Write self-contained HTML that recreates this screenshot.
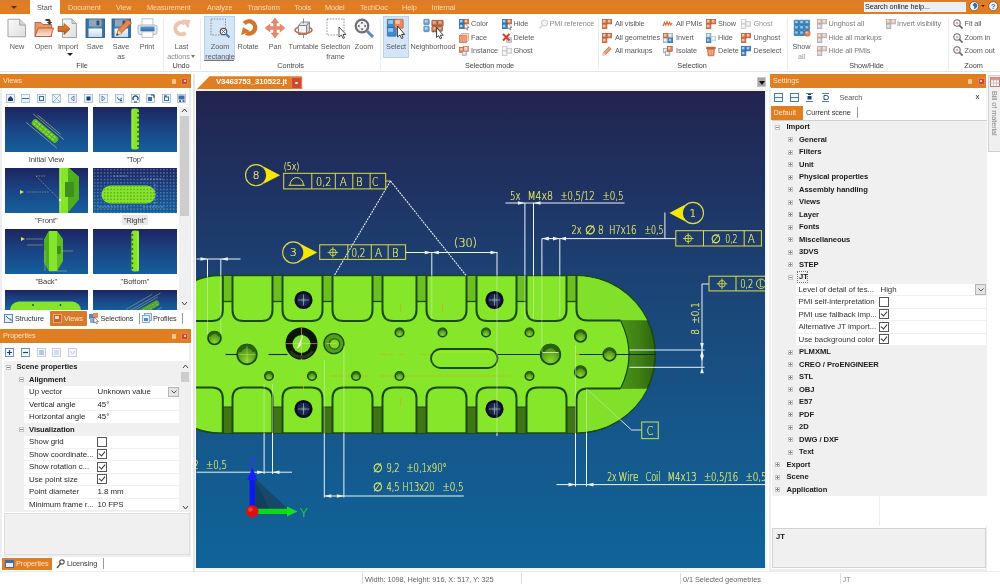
<!DOCTYPE html>
<html lang="en">
<head>
<meta charset="utf-8">
<title>3D Viewer - V3463753_310522.jt</title>
<style>
*{box-sizing:border-box;margin:0;padding:0}
html,body{width:1000px;height:584px;overflow:hidden;background:#fff}
body{filter:blur(0.35px);font-family:"Liberation Sans",sans-serif;font-size:7.3px;letter-spacing:-0.08px;color:#5a5a5a;position:relative}
.a{position:absolute}
.t{position:absolute;white-space:nowrap;line-height:10px;height:10px}
.c{transform:translateX(-50%);text-align:center}
svg{position:absolute;overflow:visible}
#topbar{left:0;top:0;width:1000px;height:14.500px;background:linear-gradient(#d97d2a,#e37d22 40%,#e27c20)}
#topbar .t{color:#f9dcbc;top:2.5px}
#ribbon{left:0;top:14px;width:1000px;height:58px;background:#fff;border-bottom:1px solid #e6e6e6}
.sep{position:absolute;top:4px;width:1px;height:52px;background:#ececec}
.gl{color:#444}
.hl{position:absolute;background:#d3e5f6;border:1px solid #b9d3ec}
.ph{position:absolute;background:#e07f22;color:#fbe3c8;height:14px}
.ph .t{color:#fbe3c8;top:2px;left:3px}
.pin{position:absolute;top:4.500px;width:4px;height:5px;background:#f6c68c;border-radius:1px}
.cls{position:absolute;top:3.500px;width:7px;height:7px;background:#d5452f;border:1px solid #e8805a}
.cls:after{content:"";position:absolute;left:1.500px;top:1.500px;width:2px;height:2px;background:#f9d0c0}
.tree{color:#2a2a2a;font-size:7.900px;letter-spacing:-0.050px}
.b{font-weight:bold;color:#1a1a1a;font-size:7.600px}
.cb{position:absolute;width:9px;height:9px;border:1px solid #555;background:#fff}
.ck:after{content:"";position:absolute;left:2px;top:0px;width:3px;height:5px;border:solid #333;border-width:0 1px 1px 0;transform:rotate(40deg)}
.pm{position:absolute;width:5px;height:5px;border:1px solid #c6c6c6;background:#fff}
.pm:before{content:"";position:absolute;left:0;top:1px;width:3px;height:1px;background:#8a8a8a}
.plus:after{content:"";position:absolute;left:1px;top:0;width:1px;height:3px;background:#8a8a8a}
#viewport{left:195.500px;top:91px;width:569.500px;height:477px;overflow:hidden;background:linear-gradient(#23244d 0%,#1f2e5c 14.5%,#1e3869 27%,#1b4678 44%,#16568a 69%,#0f6499 100%)}
.th{position:absolute;width:83.500px;height:45px;overflow:hidden;background:linear-gradient(#1d2560,#1a4585 50%,#14609c)}
.tl{color:#3a3a3a;font-size:7.600px}
.ann{font-family:"DejaVu Sans","Liberation Sans",sans-serif;font-weight:200;fill:#eef066;stroke:#eef066;stroke-width:.22px}
</style>
</head>
<body>
<div id="topbar" class="a">
<div class="a" style="left:30px;top:0;width:30px;height:15px;background:#fff"></div>
<div class="a" style="left:11px;top:6px;border:3px solid transparent;border-top:3px solid #5a2a0a;border-bottom:0"></div>
<div class="t" style="left:37px;top:2.5px;color:#5a5a5a">Start</div>
<div class="t" style="left:68px;top:2.5px;">Document</div>
<div class="t" style="left:116px;top:2.5px;">View</div>
<div class="t" style="left:147px;top:2.5px;">Measurement</div>
<div class="t" style="left:207px;top:2.5px;">Analyze</div>
<div class="t" style="left:247.5px;top:2.5px;">Transform</div>
<div class="t" style="left:294.5px;top:2.5px;">Tools</div>
<div class="t" style="left:325px;top:2.5px;">Model</div>
<div class="t" style="left:360px;top:2.5px;">TechDoc</div>
<div class="t" style="left:402px;top:2.5px;">Help</div>
<div class="t" style="left:431.5px;top:2.5px;">Internal</div>
<div class="a" style="left:863.500px;top:1.500px;width:102px;height:10.500px;background:#eceef2;border:1px solid #f8f4ee"></div>
<div class="t" style="left:865px;top:2px;color:#222">Search online help...</div>
<svg style="left:968.5px;top:1.2px" width="10.4" height="10.4" viewBox="0 0 10.4 10.4"><circle cx="5.200" cy="5.200" r="4.600" fill="#eaf2fa" stroke="#7a5230" stroke-width=".9"/><path d="M5.500 1.800c2 .3 3 1.800 2.800 3.300-.3 1.600-1.600 2.800-3.300 3-.2-1 .6-1.400 .3-2.300-.3-.8-1.500-.7-1.500-1.700 0-1 1-1.300 1.700-2.300z" fill="#2f6cb4"/></svg>
<div class="a" style="left:981px;top:5.200px;border:2px solid transparent;border-top:2.500px solid #3a1a08;border-bottom:0"></div>
<svg style="left:987.6px;top:1.2px" width="10.4" height="10.4" viewBox="0 0 10.4 10.4"><circle cx="5.200" cy="5.200" r="4.600" fill="#eaf2fa" stroke="#7a5230" stroke-width=".9"/><text x="5.200" y="8" font-size="7.500" font-weight="bold" text-anchor="middle" fill="#3a7cc8" font-family="Liberation Sans,sans-serif">?</text></svg>
</div>
<div id="ribbon" class="a">
<svg width="0" height="0" style="left:0;top:0"><defs><linearGradient id="gfold" x1="0" y1="0" x2="0" y2="1"><stop offset="0" stop-color="#f0a480"/><stop offset="1" stop-color="#fbe4d6"/></linearGradient><linearGradient id="gpage" x1="0" y1="0" x2="1" y2="1"><stop offset="0" stop-color="#fafafa"/><stop offset="1" stop-color="#dedede"/></linearGradient><linearGradient id="garrow" x1="0" y1="0" x2="0" y2="1"><stop offset="0" stop-color="#ec8a3c"/><stop offset="1" stop-color="#c05a14"/></linearGradient><linearGradient id="gflop" x1="0" y1="0" x2="1" y2="0"><stop offset="0" stop-color="#34709f"/><stop offset=".5" stop-color="#4f8fc0"/><stop offset="1" stop-color="#34709f"/></linearGradient><linearGradient id="glabel" x1="0" y1="0" x2="0" y2="1"><stop offset="0" stop-color="#fafbfc"/><stop offset="1" stop-color="#c4d8ea"/></linearGradient><linearGradient id="gband" x1="0" y1="0" x2="0" y2="1"><stop offset="0" stop-color="#5a9ad0"/><stop offset="1" stop-color="#2f6ca4"/></linearGradient></defs></svg>
<div class="hl" style="left:203.500px;top:2px;width:31px;height:44px"></div>
<div class="hl" style="left:383px;top:2px;width:26px;height:42px"></div>
<svg style="left:7.25px;top:4px" width="19.5" height="20" viewBox="0 0 20 20"><path d="M1 1h12l6 6v12H1z" fill="url(#gpage)" stroke="#a2a2a2"/><path d="M13 1v6h6" fill="#d4d4d4" stroke="#a2a2a2"/></svg>
<div class="t c" style="left:17px;top:27.5px;">New</div>
<svg style="left:33.5px;top:4px" width="20" height="20" viewBox="0 0 20 20"><path d="M1 4.500h6l2 2h8.500v12H1z" fill="#e8956c" stroke="#a4522c" stroke-width=".8"/><path d="M1 18.500l3.200-8.500h15.300l-2.500 8.500z" fill="url(#gfold)" stroke="#a4522c" stroke-width=".8"/><path d="M11.500 1h3.500q1.500 0 1.500 1.500v1.500h1.800l-2.800 2.800-2.800-2.800h1.800v-1h-3z" fill="#3a3a3a"/></svg>
<div class="t c" style="left:43.5px;top:27.5px;">Open</div>
<svg style="left:58px;top:4px" width="20" height="20" viewBox="0 0 20 20"><path d="M4.500 1h9.500l4.500 4.500v14H4.500z" fill="url(#gpage)" stroke="#9c9c9c" stroke-width=".9"/><path d="M14 1v4.500h4.500" fill="#d8d8d8" stroke="#9c9c9c" stroke-width=".9"/><path d="M0 8.500h6v-3l6 5.500-6 5.500v-3H0z" fill="url(#garrow)" stroke="#9c4a14" stroke-width=".7"/></svg>
<div class="t c" style="left:68px;top:27.5px;">Import</div>
<svg style="left:85px;top:4px" width="20" height="20" viewBox="0 0 20 20"><rect x="1" y="1" width="18.500" height="18.500" fill="url(#gflop)" stroke="#2f5f8a" stroke-width=".9"/><rect x="4" y="1.500" width="12.500" height="7" fill="#93a6b8"/><rect x="11.500" y="2.500" width="2.800" height="4.800" fill="#3c4c5e"/><rect x="3.500" y="10.500" width="13.500" height="8.500" fill="url(#glabel)"/></svg>
<div class="t c" style="left:95px;top:27.5px;">Save</div>
<svg style="left:111px;top:4px" width="20" height="20" viewBox="0 0 20 20"><rect x="1" y="1" width="18.500" height="18.500" fill="url(#gflop)" stroke="#2f5f8a" stroke-width=".9"/><rect x="4" y="1.500" width="12.500" height="7" fill="#93a6b8"/><rect x="11.500" y="2.500" width="2.800" height="4.800" fill="#3c4c5e"/><rect x="3.500" y="10.500" width="13.500" height="8.500" fill="url(#glabel)"/><path d="M5.500 17.500l2-6.500 9.500-9.500 3.500 3.500-9.500 9.500z" fill="#ec8648" stroke="#b4541e" stroke-width=".8"/><path d="M5.500 17.500l2-5.500 3.500 3.500z" fill="#f8dcc0" stroke="#b4541e" stroke-width=".4"/><path d="M5.500 17.500l.8-2.200 1.400 1.400z" fill="#333"/></svg>
<div class="t c" style="left:121px;top:27.5px;">Save</div>
<div class="t c" style="left:121px;top:37.5px;">as</div>
<svg style="left:137px;top:4px" width="20" height="20" viewBox="0 0 20 20"><rect x="5" y=".8" width="11" height="7.500" fill="#fcfcfc" stroke="#b4b4b4" stroke-width=".8"/><rect x="1" y="7" width="19" height="9.500" rx="2" fill="#e4ebf2" stroke="#9aaaba" stroke-width=".8"/><rect x="3.500" y="8.500" width="14" height="4.800" fill="url(#gband)"/><rect x="5" y="13.800" width="11" height="5.500" fill="#fdfdfd" stroke="#b4b4b4" stroke-width=".8"/></svg>
<div class="t c" style="left:147px;top:27.5px;">Print</div>
<div class="a" style="left:66.500px;top:39px;border:3px solid transparent;border-top:3px solid #222;border-bottom:0"></div>
<div class="t c gl" style="left:82px;top:47px;">File</div>
<div class="sep" style="left:162.500px"></div>
<svg style="left:172px;top:4px" width="19" height="19" viewBox="0 0 20 20"><path d="M14.200 15.500A6.300 6.300 0 1 1 13.500 5.800" fill="none" stroke="#f0c4ae" stroke-width="4.200"/><path d="M10.500 1.500L19.500 2L17 11Z" fill="#f0c4ae"/></svg>
<div class="t c" style="left:181.5px;top:27.5px;">Last</div>
<div class="t c" style="left:178.5px;top:37.5px;color:#8a8a8a">actions</div>
<div class="a" style="left:191px;top:40.500px;border:2.500px solid transparent;border-top:3px solid #777;border-bottom:0"></div>
<div class="t c gl" style="left:181px;top:47px;">Undo</div>
<div class="sep" style="left:200px"></div>
<svg style="left:210px;top:4px" width="20" height="20" viewBox="0 0 20 20"><rect x="1" y="1" width="14.500" height="16" fill="none" stroke="#7a7a7a" stroke-width=".8" stroke-dasharray="1.600 1.200"/><circle cx="13.5" cy="13.5" r="3.2" fill="#eef" stroke="#555" stroke-width="1.2"/><path d="M12 12l3 3m0-3l-3 3" stroke="#555" stroke-width=".8"/><path d="M16 16l3.5 3.5" stroke="#4a7cab" stroke-width="2"/></svg>
<div class="t c" style="left:220px;top:27.5px;">Zoom</div>
<div class="t c" style="left:220px;top:37.5px;">rectangle</div>
<svg style="left:238.5px;top:4px" width="19" height="19" viewBox="0 0 20 20"><path d="M5.500 5.800A6.500 6.500 0 1 1 7.300 15.600" fill="none" stroke="#d9742c" stroke-width="4.600"/><path d="M2.200 18.200L4.200 9.800L11.500 13.800Z" fill="#d9742c"/></svg>
<div class="t c" style="left:248px;top:27.5px;">Rotate</div>
<svg style="left:265px;top:4px" width="20" height="20" viewBox="0 0 20 20"><path d="M10 0l4 5h-2.5v3.500h3.500V6l5 4-5 4v-2.500h-3.500v3.500H14l-4 5-4-5h2.500v-3.500H5V14l-5-4 5-4v2.500h3.500V5H6z" fill="#e58a6c" stroke="#d87050" stroke-width=".4"/></svg>
<div class="t c" style="left:275px;top:27.5px;">Pan</div>
<svg style="left:293px;top:4px" width="21" height="20" viewBox="0 0 20 20"><path d="M1.500 12a8.500 3.600 0 0 1 17 0" fill="none" stroke="#b8704e" stroke-width="1.500"/><path d="M5 7.500h8v9H5z" fill="#f4f4f4" stroke="#808080" stroke-width=".9"/><path d="M5 7.500l3-3.500h8l-3 3.500z" fill="#e4e4e4" stroke="#808080" stroke-width=".9"/><path d="M13 7.500l3-3.500v9l-3 3.500z" fill="#cfcfcf" stroke="#808080" stroke-width=".9"/><path d="M10 .5v5M10 17v3" stroke="#808080" stroke-width=".9"/><path d="M1.500 12a8.500 3.600 0 0 0 17 0" fill="none" stroke="#b8704e" stroke-width="1.700"/></svg>
<div class="t c" style="left:303.5px;top:27.5px;">Turntable</div>
<svg style="left:325.5px;top:4px" width="20" height="20" viewBox="0 0 20 20"><rect x="1" y="1" width="17" height="16" fill="none" stroke="#7a7a7a" stroke-width=".8" stroke-dasharray="1.600 1.200"/><path d="M13 9v10l2.500-2 1.500 3.500 1.500-.7-1.500-3.300h3z" fill="#fff" stroke="#444" stroke-width=".9"/></svg>
<div class="t c" style="left:335.5px;top:27.5px;">Selection</div>
<div class="t c" style="left:335.5px;top:37.5px;">frame</div>
<svg style="left:354px;top:4px" width="20" height="20" viewBox="0 0 20 20"><circle cx="8" cy="8" r="6.300" fill="#f8f8f8" stroke="#6e6e74" stroke-width="2.200"/><path d="M8 3.500l1.500 2h-3zM8 12.500l1.500-2h-3zM3.500 8l2-1.500v3zM12.500 8l-2-1.500v3z" fill="#4a4a4a"/><path d="M13 13l6 6" stroke="#5a8cbc" stroke-width="3"/></svg>
<div class="t c" style="left:364px;top:27.5px;">Zoom</div>
<div class="a" style="left:204px;top:45.500px;width:30px;height:1px;background:#777"></div>
<div class="t c gl" style="left:290.5px;top:47px;">Controls</div>
<div class="sep" style="left:380px"></div>
<svg style="left:386px;top:4px" width="20" height="20" viewBox="0 0 20 20"><rect x="1.3" y="1.3" width="8.9" height="8.9" rx=".6" fill="#3f8ac8" stroke="#245c90" stroke-width=".6"/><rect x="2.2" y="2.2" width="4.75" height="3.61" fill="#a8d4f2" opacity=".85"/><rect x="1.3" y="9.3" width="8.9" height="8.9" rx=".6" fill="#3f8ac8" stroke="#245c90" stroke-width=".6"/><rect x="2.2" y="10.2" width="4.75" height="3.61" fill="#a8d4f2" opacity=".85"/><rect x="8.3" y="1.3" width="8.9" height="8.9" rx=".6" fill="#e8895a" stroke="#a8502c" stroke-width=".6"/><rect x="9.2" y="2.2" width="4.75" height="3.61" fill="#f8ccb0" opacity=".85"/><path d="M11.500 8v11l2.500-2 1.500 3.500 1.600-.7-1.500-3.300h3.200z" fill="#fff" stroke="#333" stroke-width=".9"/></svg>
<div class="t c" style="left:396px;top:27.5px;">Select</div>
<svg style="left:422.5px;top:4px" width="21" height="20" viewBox="0 0 20 20"><rect x="0.3" y="1.3" width="5.4" height="5.4" rx=".6" fill="#6aa4d4" stroke="#3c74a8" stroke-width=".6"/><rect x="1.2" y="2.2" width="3" height="2.28" fill="#c4e0f4" opacity=".85"/><rect x="0.3" y="8.3" width="5.4" height="5.4" rx=".6" fill="#6aa4d4" stroke="#3c74a8" stroke-width=".6"/><rect x="1.2" y="9.2" width="3" height="2.28" fill="#c4e0f4" opacity=".85"/><rect x="8.3" y="2.3" width="5.6" height="5.6" rx=".6" fill="#c8744c" stroke="#7c4428" stroke-width=".6"/><rect x="9.2" y="3.2" width="3.1" height="2.356" fill="#eab898" opacity=".85"/><rect x="14.1" y="2.3" width="5.6" height="5.6" rx=".6" fill="#c8744c" stroke="#7c4428" stroke-width=".6"/><rect x="15" y="3.2" width="3.1" height="2.356" fill="#eab898" opacity=".85"/><rect x="8.3" y="8.3" width="5.6" height="5.6" rx=".6" fill="#c8744c" stroke="#7c4428" stroke-width=".6"/><rect x="9.2" y="9.2" width="3.1" height="2.356" fill="#eab898" opacity=".85"/><rect x="14.1" y="8.3" width="4.9" height="4.9" rx=".6" fill="#c8744c" stroke="#7c4428" stroke-width=".6"/><rect x="15" y="9.2" width="2.75" height="2.09" fill="#eab898" opacity=".85"/><path d="M13 9.500v10l2.300-1.800 1.400 3.200 1.500-.7-1.400-3h3z" fill="#fff" stroke="#333" stroke-width=".9"/></svg>
<div class="t c" style="left:433px;top:27.5px;">Neighborhood</div>
<svg style="left:459px;top:4.7px" width="10" height="10" viewBox="0 0 10 10"><rect x="0.25" y="0.25" width="4.7" height="4.7" fill="#3f86c4" stroke="#245a8c" stroke-width=".5"/><rect x="1" y="1" width="2.34" height="2.34" fill="#a4d0f0"/><rect x="0.25" y="5.05" width="4.7" height="4.7" fill="#3f86c4" stroke="#245a8c" stroke-width=".5"/><rect x="1" y="5.8" width="2.34" height="2.34" fill="#a4d0f0"/><rect x="5.05" y="0.25" width="4.7" height="4.7" fill="#e27a4a" stroke="#a04e2c" stroke-width=".5"/><rect x="5.8" y="1" width="2.34" height="2.34" fill="#f6c4a4"/><path d="M5.500 4v6l1.500-1.200 1 2.200 1-.5-1-2.100h2z" fill="#fff" stroke="#333" stroke-width=".5"/></svg>
<div class="t" style="left:471px;top:4.7px;">Color</div>
<svg style="left:459px;top:18.8px" width="10" height="10" viewBox="0 0 10 10"><path d="M.5 2.500l2-2h7v7l-2 2h-7z" fill="#f8d4c0" stroke="#c8785a" stroke-width=".5"/><rect x=".5" y="2.500" width="7" height="7" fill="#ee9a74" stroke="#c86a44" stroke-width=".5"/></svg>
<div class="t" style="left:471px;top:18.8px;">Face</div>
<svg style="left:459px;top:32px" width="10" height="10" viewBox="0 0 10 10"><rect x="0.25" y="1.25" width="5.1" height="5.1" fill="#e27a4a" stroke="#a04e2c" stroke-width=".5"/><rect x="1" y="2" width="2.52" height="2.52" fill="#f6c4a4"/><rect x="4.65" y="0.25" width="5.1" height="5.1" fill="#f2a888" stroke="#c0583a" stroke-width=".5"/><rect x="5.4" y="1" width="2.52" height="2.52" fill="#fbe0d2"/><rect x="3.25" y="5.25" width="4.3" height="4.3" fill="#c4ccd6" stroke="#8a96a4" stroke-width=".5"/><rect x="4" y="6" width="2.16" height="2.16" fill="#eef2f6"/></svg>
<div class="t" style="left:471px;top:32px;">Instance</div>
<svg style="left:501.5px;top:4.7px" width="10" height="10" viewBox="0 0 10 10"><rect x="0.25" y="0.25" width="4.7" height="4.7" fill="#3f86c4" stroke="#245a8c" stroke-width=".5"/><rect x="1" y="1" width="2.34" height="2.34" fill="#a4d0f0"/><rect x="0.25" y="5.05" width="4.7" height="4.7" fill="#3f86c4" stroke="#245a8c" stroke-width=".5"/><rect x="1" y="5.8" width="2.34" height="2.34" fill="#a4d0f0"/><rect x="5.05" y="0.25" width="4.7" height="4.7" fill="#e27a4a" stroke="#a04e2c" stroke-width=".5"/><rect x="5.8" y="1" width="2.34" height="2.34" fill="#f6c4a4"/><path d="M5.500 4v6l1.500-1.200 1 2.200 1-.5-1-2.100h2z" fill="#fff" stroke="#333" stroke-width=".5"/></svg>
<div class="t" style="left:513.5px;top:4.7px;">Hide</div>
<svg style="left:501.5px;top:18.8px" width="10" height="10" viewBox="0 0 10 10"><rect x="4.75" y="4.75" width="4.7" height="4.7" fill="#c4ccd6" stroke="#8a96a4" stroke-width=".5"/><rect x="5.5" y="5.5" width="2.34" height="2.34" fill="#eef2f6"/><path d="M1 1l6.500 6.500M7.500 1l-6.500 6.500" stroke="#d83a2a" stroke-width="2"/></svg>
<div class="t" style="left:513.5px;top:18.8px;">Delete</div>
<svg style="left:501.5px;top:32px" width="10" height="10" viewBox="0 0 10 10"><rect x="0.25" y="0.25" width="4.7" height="4.7" fill="#ececec" stroke="#b4b4b4" stroke-width=".5"/><rect x="1" y="1" width="2.34" height="2.34" fill="#fafafa"/><rect x="0.25" y="5.05" width="4.7" height="4.7" fill="#ececec" stroke="#b4b4b4" stroke-width=".5"/><rect x="1" y="5.8" width="2.34" height="2.34" fill="#fafafa"/><rect x="5.05" y="2.65" width="4.7" height="4.7" fill="#e4e4e4" stroke="#b4b4b4" stroke-width=".5"/><rect x="5.8" y="3.4" width="2.34" height="2.34" fill="#f6f6f6"/></svg>
<div class="t" style="left:513.5px;top:32px;">Ghost</div>
<svg style="left:538.5px;top:4.7px" width="10" height="10" viewBox="0 0 10 10"><circle cx="5.500" cy="4" r="3" fill="#f4f4f4" stroke="#cfcfcf" stroke-width="1.200"/><path d="M3.500 6l-3 3.500" stroke="#d8d8d8" stroke-width="1.600"/></svg>
<div class="t" style="left:549.5px;top:4.7px;color:#8a8a8a">PMI reference</div>
<div class="t c gl" style="left:489.5px;top:47px;">Selection mode</div>
<div class="sep" style="left:598px"></div>
<svg style="left:602px;top:4.7px" width="10" height="10" viewBox="0 0 10 10"><rect x="0.25" y="0.25" width="4.7" height="4.7" fill="#e27a4a" stroke="#a04e2c" stroke-width=".5"/><rect x="1" y="1" width="2.34" height="2.34" fill="#f6c4a4"/><rect x="5.05" y="0.25" width="4.7" height="4.7" fill="#e27a4a" stroke="#a04e2c" stroke-width=".5"/><rect x="5.8" y="1" width="2.34" height="2.34" fill="#f6c4a4"/><rect x="0.25" y="5.05" width="4.7" height="4.7" fill="#e27a4a" stroke="#a04e2c" stroke-width=".5"/><rect x="1" y="5.8" width="2.34" height="2.34" fill="#f6c4a4"/></svg>
<div class="t" style="left:615px;top:4.7px;">All visible</div>
<svg style="left:602px;top:18.8px" width="10" height="10" viewBox="0 0 10 10"><rect x="0.25" y="0.25" width="4.7" height="4.7" fill="#e27a4a" stroke="#a04e2c" stroke-width=".5"/><rect x="1" y="1" width="2.34" height="2.34" fill="#f6c4a4"/><rect x="5.05" y="0.25" width="4.7" height="4.7" fill="#e27a4a" stroke="#a04e2c" stroke-width=".5"/><rect x="5.8" y="1" width="2.34" height="2.34" fill="#f6c4a4"/><rect x="0.25" y="5.05" width="4.7" height="4.7" fill="#e27a4a" stroke="#a04e2c" stroke-width=".5"/><rect x="1" y="5.8" width="2.34" height="2.34" fill="#f6c4a4"/></svg>
<div class="t" style="left:615px;top:18.8px;">All geometries</div>
<svg style="left:602px;top:32px" width="10" height="10" viewBox="0 0 10 10"><path d="M.8 9.200l.8-3 5.400-5.400 2.200 2.200-5.400 5.400z" fill="#ee9a74" stroke="#b05a38" stroke-width=".6"/><path d="M.8 9.200l.8-3 2.200 2.200z" fill="#f8dcc8"/></svg>
<div class="t" style="left:615px;top:32px;">All markups</div>
<svg style="left:663px;top:4.7px" width="10" height="10" viewBox="0 0 10 10"><path d="M0 7l1.500-3.500 1.200 2.500 1.300-3 1.300 3 1.200-2.500 1.300 2.500 1.200-2" fill="none" stroke="#e0703a" stroke-width="1.300"/></svg>
<div class="t" style="left:676px;top:4.7px;">All PMIs</div>
<svg style="left:663px;top:18.8px" width="10" height="10" viewBox="0 0 10 10"><rect x="0.25" y="0.25" width="4.7" height="4.7" fill="#e27a4a" stroke="#a04e2c" stroke-width=".5"/><rect x="1" y="1" width="2.34" height="2.34" fill="#f6c4a4"/><rect x="5.05" y="0.25" width="4.7" height="4.7" fill="#c4ccd6" stroke="#8a96a4" stroke-width=".5"/><rect x="5.8" y="1" width="2.34" height="2.34" fill="#eef2f6"/><rect x="0.25" y="5.05" width="4.7" height="4.7" fill="#c4ccd6" stroke="#8a96a4" stroke-width=".5"/><rect x="1" y="5.8" width="2.34" height="2.34" fill="#eef2f6"/><rect x="5.05" y="5.05" width="4.7" height="4.7" fill="#3f86c4" stroke="#245a8c" stroke-width=".5"/><rect x="5.8" y="5.8" width="2.34" height="2.34" fill="#a4d0f0"/></svg>
<div class="t" style="left:676px;top:18.8px;">Invert</div>
<svg style="left:663px;top:32px" width="10" height="10" viewBox="0 0 10 10"><rect x="0.25" y="2.25" width="4.7" height="4.7" fill="#c4ccd6" stroke="#8a96a4" stroke-width=".5"/><rect x="1" y="3" width="2.34" height="2.34" fill="#eef2f6"/><rect x="2.25" y="5.05" width="4.7" height="4.7" fill="#c4ccd6" stroke="#8a96a4" stroke-width=".5"/><rect x="3" y="5.8" width="2.34" height="2.34" fill="#eef2f6"/><rect x="4.25" y="0.25" width="5.1" height="5.1" fill="#e27a4a" stroke="#a04e2c" stroke-width=".5"/><rect x="5" y="1" width="2.52" height="2.52" fill="#f6c4a4"/></svg>
<div class="t" style="left:676px;top:32px;">Isolate</div>
<svg style="left:705.5px;top:4.7px" width="10" height="10" viewBox="0 0 10 10"><rect x="0.25" y="0.25" width="4.7" height="4.7" fill="#e27a4a" stroke="#a04e2c" stroke-width=".5"/><rect x="1" y="1" width="2.34" height="2.34" fill="#f6c4a4"/><rect x="5.05" y="0.25" width="4.7" height="4.7" fill="#e27a4a" stroke="#a04e2c" stroke-width=".5"/><rect x="5.8" y="1" width="2.34" height="2.34" fill="#f6c4a4"/><rect x="0.25" y="5.05" width="4.7" height="4.7" fill="#e27a4a" stroke="#a04e2c" stroke-width=".5"/><rect x="1" y="5.8" width="2.34" height="2.34" fill="#f6c4a4"/></svg>
<div class="t" style="left:718px;top:4.7px;">Show</div>
<svg style="left:705.5px;top:18.8px" width="10" height="10" viewBox="0 0 10 10"><rect x="0.25" y="0.25" width="4.7" height="4.7" fill="#9cc8ec" stroke="#5a8ab4" stroke-width=".5"/><rect x="1" y="1" width="2.34" height="2.34" fill="#dcecf8"/><rect x="0.25" y="5.05" width="4.7" height="4.7" fill="#3f86c4" stroke="#245a8c" stroke-width=".5"/><rect x="1" y="5.8" width="2.34" height="2.34" fill="#a4d0f0"/><rect x="5.05" y="3.25" width="4.7" height="4.7" fill="#dce8f4" stroke="#a4b8cc" stroke-width=".5"/><rect x="5.8" y="4" width="2.34" height="2.34" fill="#f4f8fc"/></svg>
<div class="t" style="left:718px;top:18.8px;">Hide</div>
<svg style="left:705.5px;top:32px" width="10" height="10" viewBox="0 0 10 10"><path d="M1.500 2.800h7l-.6 7H2.100z" fill="#ea8c64" stroke="#b4522c" stroke-width=".6"/><rect x=".7" y="1" width="8.600" height="1.800" fill="#d4683c" stroke="#a04a28" stroke-width=".4"/><path d="M3.500 4v4.500M5 4v4.500M6.500 4v4.500" stroke="#f6c4a8" stroke-width=".6"/></svg>
<div class="t" style="left:718px;top:32px;">Delete</div>
<svg style="left:741px;top:4.7px" width="10" height="10" viewBox="0 0 10 10"><rect x="0.25" y="0.25" width="4.7" height="4.7" fill="#ececec" stroke="#b4b4b4" stroke-width=".5"/><rect x="1" y="1" width="2.34" height="2.34" fill="#fafafa"/><rect x="0.25" y="5.05" width="4.7" height="4.7" fill="#ececec" stroke="#b4b4b4" stroke-width=".5"/><rect x="1" y="5.8" width="2.34" height="2.34" fill="#fafafa"/><rect x="5.05" y="2.65" width="4.7" height="4.7" fill="#e4e4e4" stroke="#b4b4b4" stroke-width=".5"/><rect x="5.8" y="3.4" width="2.34" height="2.34" fill="#f6f6f6"/></svg>
<div class="t" style="left:753.5px;top:4.7px;color:#9a9a9a">Ghost</div>
<svg style="left:741px;top:18.8px" width="10" height="10" viewBox="0 0 10 10"><rect x="0.25" y="0.25" width="4.7" height="4.7" fill="#e27a4a" stroke="#a04e2c" stroke-width=".5"/><rect x="1" y="1" width="2.34" height="2.34" fill="#f6c4a4"/><rect x="5.05" y="0.25" width="4.7" height="4.7" fill="#e27a4a" stroke="#a04e2c" stroke-width=".5"/><rect x="5.8" y="1" width="2.34" height="2.34" fill="#f6c4a4"/><rect x="0.25" y="5.05" width="4.7" height="4.7" fill="#e27a4a" stroke="#a04e2c" stroke-width=".5"/><rect x="1" y="5.8" width="2.34" height="2.34" fill="#f6c4a4"/></svg>
<div class="t" style="left:753.5px;top:18.8px;">Unghost</div>
<svg style="left:741px;top:32px" width="10" height="10" viewBox="0 0 10 10"><rect x="0.25" y="0.25" width="4.7" height="4.7" fill="#3f86c4" stroke="#245a8c" stroke-width=".5"/><rect x="1" y="1" width="2.34" height="2.34" fill="#a4d0f0"/><rect x="5.05" y="0.25" width="4.7" height="4.7" fill="#3f86c4" stroke="#245a8c" stroke-width=".5"/><rect x="5.8" y="1" width="2.34" height="2.34" fill="#a4d0f0"/><rect x="0.25" y="5.05" width="4.7" height="4.7" fill="#3f86c4" stroke="#245a8c" stroke-width=".5"/><rect x="1" y="5.8" width="2.34" height="2.34" fill="#a4d0f0"/></svg>
<div class="t" style="left:753.5px;top:32px;">Deselect</div>
<div class="t c gl" style="left:692px;top:47px;">Selection</div>
<div class="sep" style="left:786.500px"></div>
<svg style="left:793px;top:4.5px" width="17.5" height="17.5" viewBox="0 0 20 20"><rect x="1.3" y="1.3" width="5.7" height="5.7" rx=".6" fill="#3f8ac8" stroke="#245c90" stroke-width=".6"/><rect x="2.2" y="2.2" width="3.15" height="2.394" fill="#a8d4f2" opacity=".85"/><rect x="7.3" y="1.3" width="5.7" height="5.7" rx=".6" fill="#3f8ac8" stroke="#245c90" stroke-width=".6"/><rect x="8.2" y="2.2" width="3.15" height="2.394" fill="#a8d4f2" opacity=".85"/><rect x="13.3" y="1.3" width="5.7" height="5.7" rx=".6" fill="#3f8ac8" stroke="#245c90" stroke-width=".6"/><rect x="14.2" y="2.2" width="3.15" height="2.394" fill="#a8d4f2" opacity=".85"/><rect x="1.3" y="7.3" width="5.7" height="5.7" rx=".6" fill="#3f8ac8" stroke="#245c90" stroke-width=".6"/><rect x="2.2" y="8.2" width="3.15" height="2.394" fill="#a8d4f2" opacity=".85"/><rect x="7.3" y="7.3" width="5.7" height="5.7" rx=".6" fill="#3f8ac8" stroke="#245c90" stroke-width=".6"/><rect x="8.2" y="8.2" width="3.15" height="2.394" fill="#a8d4f2" opacity=".85"/><rect x="13.3" y="7.3" width="5.7" height="5.7" rx=".6" fill="#3f8ac8" stroke="#245c90" stroke-width=".6"/><rect x="14.2" y="8.2" width="3.15" height="2.394" fill="#a8d4f2" opacity=".85"/><rect x="1.3" y="13.3" width="5.7" height="5.7" rx=".6" fill="#3f8ac8" stroke="#245c90" stroke-width=".6"/><rect x="2.2" y="14.2" width="3.15" height="2.394" fill="#a8d4f2" opacity=".85"/><rect x="7.3" y="13.3" width="5.7" height="5.7" rx=".6" fill="#3f8ac8" stroke="#245c90" stroke-width=".6"/><rect x="8.2" y="14.2" width="3.15" height="2.394" fill="#a8d4f2" opacity=".85"/><rect x="13.3" y="13.3" width="5.7" height="5.7" rx=".6" fill="#3f8ac8" stroke="#245c90" stroke-width=".6"/><rect x="14.2" y="14.2" width="3.15" height="2.394" fill="#a8d4f2" opacity=".85"/><circle cx="16.500" cy="16.500" r="3.200" fill="#e8895a" stroke="#a8502c" stroke-width=".5"/><circle cx="15.500" cy="15.500" r="1.200" fill="#f8ccb0"/></svg>
<div class="t c" style="left:801.5px;top:27.5px;">Show</div>
<div class="t c" style="left:801.5px;top:37.5px;color:#999">all</div>
<svg style="left:816.5px;top:4.7px" width="10" height="10" viewBox="0 0 10 10"><rect x="0.25" y="0.25" width="4.7" height="4.7" fill="#dcb8a8" stroke="#b89888" stroke-width=".5"/><rect x="1" y="1" width="2.34" height="2.34" fill="#f0dcd2"/><rect x="5.05" y="0.25" width="4.7" height="4.7" fill="#d4c4c4" stroke="#b0a0a0" stroke-width=".5"/><rect x="5.8" y="1" width="2.34" height="2.34" fill="#ece4e4"/><rect x="0.25" y="5.05" width="4.7" height="4.7" fill="#c8c4cc" stroke="#a09ca4" stroke-width=".5"/><rect x="1" y="5.8" width="2.34" height="2.34" fill="#e8e6ea"/></svg>
<div class="t" style="left:828.5px;top:4.7px;color:#7c7c7c">Unghost all</div>
<svg style="left:816.5px;top:18.8px" width="10" height="10" viewBox="0 0 10 10"><rect x="0.25" y="0.25" width="4.7" height="4.7" fill="#dcb8a8" stroke="#b89888" stroke-width=".5"/><rect x="1" y="1" width="2.34" height="2.34" fill="#f0dcd2"/><rect x="5.05" y="0.25" width="4.7" height="4.7" fill="#d4c4c4" stroke="#b0a0a0" stroke-width=".5"/><rect x="5.8" y="1" width="2.34" height="2.34" fill="#ece4e4"/><rect x="0.25" y="5.05" width="4.7" height="4.7" fill="#c8c4cc" stroke="#a09ca4" stroke-width=".5"/><rect x="1" y="5.8" width="2.34" height="2.34" fill="#e8e6ea"/></svg>
<div class="t" style="left:828.5px;top:18.8px;color:#7c7c7c">Hide all markups</div>
<svg style="left:816.5px;top:32px" width="10" height="10" viewBox="0 0 10 10"><rect x="0.25" y="0.25" width="4.7" height="4.7" fill="#dcb8a8" stroke="#b89888" stroke-width=".5"/><rect x="1" y="1" width="2.34" height="2.34" fill="#f0dcd2"/><rect x="5.05" y="0.25" width="4.7" height="4.7" fill="#d4c4c4" stroke="#b0a0a0" stroke-width=".5"/><rect x="5.8" y="1" width="2.34" height="2.34" fill="#ece4e4"/><rect x="0.25" y="5.05" width="4.7" height="4.7" fill="#c8c4cc" stroke="#a09ca4" stroke-width=".5"/><rect x="1" y="5.8" width="2.34" height="2.34" fill="#e8e6ea"/></svg>
<div class="t" style="left:828.5px;top:32px;color:#7c7c7c">Hide all PMIs</div>
<svg style="left:885.5px;top:4.7px" width="10" height="10" viewBox="0 0 10 10"><rect x="0.25" y="0.25" width="4.7" height="4.7" fill="#dcb8a8" stroke="#b89888" stroke-width=".5"/><rect x="1" y="1" width="2.34" height="2.34" fill="#f0dcd2"/><rect x="5.05" y="0.25" width="4.7" height="4.7" fill="#d4c4c4" stroke="#b0a0a0" stroke-width=".5"/><rect x="5.8" y="1" width="2.34" height="2.34" fill="#ece4e4"/><rect x="0.25" y="5.05" width="4.7" height="4.7" fill="#c8c4cc" stroke="#a09ca4" stroke-width=".5"/><rect x="1" y="5.8" width="2.34" height="2.34" fill="#e8e6ea"/></svg>
<div class="t" style="left:897px;top:4.7px;color:#7c7c7c">Invert visibility</div>
<div class="t c gl" style="left:866.5px;top:47px;">Show/Hide</div>
<div class="sep" style="left:947.500px"></div>
<svg style="left:952.5px;top:4.7px" width="10" height="10" viewBox="0 0 10 10"><circle cx="4" cy="4" r="3.200" fill="#f6f6f6" stroke="#6e6e78" stroke-width="1.100"/><circle cx="4" cy="4" r="1.100" fill="#e89868"/><path d="M6.400 6.400l3.200 3.200" stroke="#5a6a80" stroke-width="1.600"/></svg>
<div class="t" style="left:964.5px;top:4.7px;">Fit all</div>
<svg style="left:952.5px;top:18.8px" width="10" height="10" viewBox="0 0 10 10"><circle cx="4" cy="4" r="3.200" fill="#f6f6f6" stroke="#6e6e78" stroke-width="1.100"/><circle cx="4" cy="4" r="1.100" fill="#e89868"/><path d="M6.400 6.400l3.200 3.200" stroke="#5a6a80" stroke-width="1.600"/></svg>
<div class="t" style="left:964.5px;top:18.8px;">Zoom in</div>
<svg style="left:952.5px;top:32px" width="10" height="10" viewBox="0 0 10 10"><circle cx="4" cy="4" r="3.200" fill="#f6f6f6" stroke="#6e6e78" stroke-width="1.100"/><circle cx="4" cy="4" r="1.100" fill="#e89868"/><path d="M6.400 6.400l3.200 3.200" stroke="#5a6a80" stroke-width="1.600"/></svg>
<div class="t" style="left:964.5px;top:32px;">Zoom out</div>
<div class="t c gl" style="left:973.5px;top:47px;">Zoom</div>
</div>
<div id="views" class="a" style="left:0;top:74px;width:192px;height:254px">
<div class="ph" style="left:0;top:0;width:191px"><div class="t">Views</div><div class="pin" style="left:172px"></div><div class="cls" style="left:181px"></div></div>
<div class="a" style="left:0;top:14px;width:191px;height:223px;border:2px solid #eceff2;border-top:0"></div>
<svg style="left:5.8px;top:19.5px" width="9" height="9" viewBox="0 0 9 9"><rect x=".5" y=".5" width="8" height="8" fill="#eef4fb" stroke="#9cb8d8" stroke-width=".8"/><path d="M2 4.500l2.500-2.500 2.500 2.500v2.500h-5z" fill="#1d3f70"/></svg>
<svg style="left:21.2px;top:19.5px" width="9" height="9" viewBox="0 0 9 9"><rect x=".5" y=".5" width="8" height="8" fill="#eef4fb" stroke="#9cb8d8" stroke-width=".8"/><path d="M1 4.500h7" stroke="#3a6ea5"/></svg>
<svg style="left:36.7px;top:19.5px" width="9" height="9" viewBox="0 0 9 9"><rect x=".5" y=".5" width="8" height="8" fill="#eef4fb" stroke="#9cb8d8" stroke-width=".8"/><rect x="2.500" y="2.500" width="4" height="4" fill="none" stroke="#3a6ea5"/></svg>
<svg style="left:52.3px;top:19.5px" width="9" height="9" viewBox="0 0 9 9"><rect x=".5" y=".5" width="8" height="8" fill="#eef4fb" stroke="#9cb8d8" stroke-width=".8"/><path d="M1 1l7 7M8 1l-7 7" stroke="#7a9cc5" stroke-width=".7"/></svg>
<svg style="left:67.9px;top:19.5px" width="9" height="9" viewBox="0 0 9 9"><rect x=".5" y=".5" width="8" height="8" fill="#eef4fb" stroke="#9cb8d8" stroke-width=".8"/><path d="M6 2l-3 2.500 3 2.500z" fill="none" stroke="#3a6ea5" stroke-width=".8"/></svg>
<svg style="left:83.7px;top:19.5px" width="9" height="9" viewBox="0 0 9 9"><rect x=".5" y=".5" width="8" height="8" fill="#eef4fb" stroke="#9cb8d8" stroke-width=".8"/><rect x="2.500" y="2.500" width="4" height="4" fill="#1d3f70"/></svg>
<svg style="left:99.1px;top:19.5px" width="9" height="9" viewBox="0 0 9 9"><rect x=".5" y=".5" width="8" height="8" fill="#eef4fb" stroke="#9cb8d8" stroke-width=".8"/><path d="M3 2l3 2.500-3 2.500z" fill="none" stroke="#3a6ea5" stroke-width=".8"/></svg>
<svg style="left:114.9px;top:19.5px" width="9" height="9" viewBox="0 0 9 9"><rect x=".5" y=".5" width="8" height="8" fill="#eef4fb" stroke="#9cb8d8" stroke-width=".8"/><path d="M2 3l2 3 3-2" fill="none" stroke="#3a6ea5"/><circle cx="6" cy="6.500" r="1" fill="#1d3f70"/></svg>
<svg style="left:130.5px;top:19.5px" width="9" height="9" viewBox="0 0 9 9"><rect x=".5" y=".5" width="8" height="8" fill="#eef4fb" stroke="#9cb8d8" stroke-width=".8"/><path d="M2.500 6a2.500 2.500 0 1 1 4 0" fill="none" stroke="#1d3f70" stroke-width="1.200"/><path d="M3 8h3" stroke="#1d3f70"/></svg>
<svg style="left:146.1px;top:19.5px" width="9" height="9" viewBox="0 0 9 9"><rect x=".5" y=".5" width="8" height="8" fill="#eef4fb" stroke="#9cb8d8" stroke-width=".8"/><rect x="2" y="3" width="4" height="4" fill="#3a6ea5"/><path d="M5 1h3v3" fill="none" stroke="#1d3f70"/></svg>
<svg style="left:161.7px;top:19.5px" width="9" height="9" viewBox="0 0 9 9"><rect x=".5" y=".5" width="8" height="8" fill="#eef4fb" stroke="#9cb8d8" stroke-width=".8"/><rect x="2.500" y="3" width="4" height="3.500" fill="none" stroke="#3a6ea5"/><path d="M2 2h3" stroke="#1d3f70"/></svg>
<svg style="left:177.3px;top:19.5px" width="9" height="9" viewBox="0 0 9 9"><rect x=".5" y=".5" width="8" height="8" fill="#eef4fb" stroke="#9cb8d8" stroke-width=".8"/><rect x="1.500" y="1.500" width="6" height="4" fill="#3a6ea5"/><path d="M2 7h2M5.500 7h2" stroke="#1d3f70" stroke-width="1.300"/></svg>
<div class="th" style="left:4.6px;top:32.5px;"><svg style="left:0;top:0" width="84" height="45" viewBox="0 0 84 45"><g transform="rotate(40 40 24)"><rect x="24" y="20.500" width="32" height="7" rx="3" fill="#5fb828"/><path d="M26 22.500h28M26 25.500h28" stroke="#9ae83a" stroke-width="1.200" stroke-dasharray="2.500 1.500"/><path d="M20 18.500h40M20 29.500h40M24 16.500h30" stroke="#d8d88a" stroke-width=".5" fill="none"/></g></svg></div>
<div class="th" style="left:93px;top:32.5px;"><svg style="left:0;top:0" width="84" height="45" viewBox="0 0 84 45"><rect x="38.400" y="1.500" width="7.600" height="41" rx="3" fill="#86e52a"/><g transform="translate(44.200 0)"><rect x="0" y="5" width="1.800" height="2" fill="#2f6f18"/><rect x="0" y="9.7" width="1.800" height="2" fill="#2f6f18"/><rect x="0" y="14.4" width="1.800" height="2" fill="#2f6f18"/><rect x="0" y="19.1" width="1.800" height="2" fill="#2f6f18"/><rect x="0" y="23.8" width="1.800" height="2" fill="#2f6f18"/><rect x="0" y="28.5" width="1.800" height="2" fill="#2f6f18"/><rect x="0" y="33.2" width="1.800" height="2" fill="#2f6f18"/><rect x="0" y="37.9" width="1.800" height="2" fill="#2f6f18"/></g><rect x="38.400" y="1.500" width="2" height="41" rx="1" fill="#a8f04a" opacity=".6"/></svg></div>
<div class="t c tl" style="left:46.3px;top:80.5px;">Initial View</div>
<div class="t c tl" style="left:135px;top:80.5px;">"Top"</div>
<div class="th" style="left:4.6px;top:93.5px;"><svg style="left:0;top:0" width="84" height="45" viewBox="0 0 84 45"><path d="M55 0h9l10 9v22l-10 12h-9z" fill="#6fcf24"/><path d="M55 0h8v45h-8z" fill="#86e52a"/><path d="M63 0l11 9v22l-11 13z" fill="#4fae1c"/><rect x="60" y="14" width="9" height="15" fill="#3f8f1f"/><path d="M55 0v45" stroke="#a8f04a" stroke-width="1.500"/><path d="M22 24h22M31 8l24 24M31 8h10" stroke="#b8c880" stroke-width=".5" stroke-dasharray="1.500 1" fill="none"/><path d="M15 22l4 2-4 2z" fill="#e8e23a"/><circle cx="55" cy="32" r="1.200" fill="#fff"/></svg></div>
<div class="th" style="left:93px;top:93.5px;"><svg style="left:0;top:0" width="84" height="45" viewBox="0 0 84 45"><defs><pattern id="dg" width="3.300" height="3.300" patternUnits="userSpaceOnUse"><circle cx="1.600" cy="1.600" r=".55" fill="#a8c8ea"/></pattern><pattern id="dg2" width="3.300" height="3.300" patternUnits="userSpaceOnUse"><circle cx="1.600" cy="1.600" r=".65" fill="#2a6f18"/></pattern></defs><rect width="84" height="45" fill="url(#dg)"/><rect x="8.500" y="17.500" width="54" height="18" rx="9" fill="#86e52a"/><rect x="8.500" y="17.500" width="54" height="18" rx="9" fill="url(#dg2)"/><path d="M20 8h14M48 11h22M62 16v22M6 39h30M50 39h20" stroke="#9fd0e8" stroke-width=".5" stroke-dasharray="2 1" fill="none"/></svg></div>
<div class="a" style="left:122px;top:141px;width:26px;height:9.500px;background:#e9e9e9"></div>
<div class="t c tl" style="left:46.3px;top:141.5px;">"Front"</div>
<div class="t c tl" style="left:135px;top:141.5px;">"Right"</div>
<div class="th" style="left:4.6px;top:154.5px;"><svg style="left:0;top:0" width="84" height="45" viewBox="0 0 84 45"><path d="M44 2l8 0v40l-8 0-5-9v-22z" fill="#86e52a"/><path d="M52 2l6 8v22l-6 10z" fill="#5fc020"/><path d="M39 11l5-9v40l-5-9z" fill="#4fae1c"/><rect x="52" y="17" width="4" height="8" fill="#3f8f1f"/><path d="M21 10h17M22 16h16M40 22v20M44 42h18M56 22h12" stroke="#b8c880" stroke-width=".5" fill="none"/><path d="M16 8l4 2-4 2z" fill="#e8e23a"/></svg></div>
<div class="th" style="left:93px;top:154.5px;"><svg style="left:0;top:0" width="84" height="45" viewBox="0 0 84 45"><rect x="38.400" y="1.500" width="7.600" height="41" rx="3" fill="#86e52a"/><g transform="translate(38.400 0)"><rect x="0" y="5" width="1.800" height="2" fill="#2f6f18"/><rect x="0" y="9.7" width="1.800" height="2" fill="#2f6f18"/><rect x="0" y="14.4" width="1.800" height="2" fill="#2f6f18"/><rect x="0" y="19.1" width="1.800" height="2" fill="#2f6f18"/><rect x="0" y="23.8" width="1.800" height="2" fill="#2f6f18"/><rect x="0" y="28.5" width="1.800" height="2" fill="#2f6f18"/><rect x="0" y="33.2" width="1.800" height="2" fill="#2f6f18"/><rect x="0" y="37.9" width="1.800" height="2" fill="#2f6f18"/></g><rect x="44" y="1.500" width="2" height="41" rx="1" fill="#a8f04a" opacity=".6"/></svg></div>
<div class="t c tl" style="left:46.3px;top:202.5px;">"Back"</div>
<div class="t c tl" style="left:135px;top:202.5px;">"Bottom"</div>
<div class="th" style="left:4.6px;top:216px;height:19.500px"><svg style="left:0;top:0" width="84" height="45" viewBox="0 0 84 45"><rect x="5" y="11.500" width="71" height="50" rx="9" fill="#86e52a"/><circle cx="28" cy="15" r=".9" fill="#1a4010"/><circle cx="55.500" cy="15" r=".9" fill="#1a4010"/></svg></div>
<div class="th" style="left:93px;top:216px;height:19.500px"><svg style="left:0;top:0" width="84" height="45" viewBox="0 0 84 45"><g transform="rotate(-30 52 20)"><rect x="34" y="17" width="34" height="6" rx="2.500" fill="#4fa030"/><path d="M36 19h30M36 21.500h30" stroke="#7fd040" stroke-width=".8" stroke-dasharray="2 1.500"/><path d="M30 13h44M30 15h40M36 10h30M40 26h28" stroke="#a8b888" stroke-width=".45" fill="none"/></g></svg></div>
<div class="a" style="left:178.500px;top:33px;width:11px;height:203px;background:#f0f0f0"></div>
<div class="a" style="left:179.500px;top:42px;width:9px;height:100px;background:#cdcdcd"></div>
<svg style="left:180.5px;top:34px" width="7" height="5" viewBox="0 0 7 5"><path d="M1 4l2.500-3 2.500 3" fill="none" stroke="#444" stroke-width="1"/></svg>
<svg style="left:180.5px;top:227px" width="7" height="5" viewBox="0 0 7 5"><path d="M1 1l2.500 3 2.500-3" fill="none" stroke="#444" stroke-width="1"/></svg>
<div class="a" style="left:0;top:236px;width:191px;height:17px;background:#fff"></div>
<div class="a" style="left:49.500px;top:237px;width:37.500px;height:15px;background:#d87a2c;border-radius:1px"></div>
<svg style="left:4px;top:239.5px" width="9" height="9" viewBox="0 0 9 9"><rect x=".5" y=".5" width="8" height="8" fill="#e6eef8" stroke="#5f86b5"/><path d="M2 2l3 3M5 5h2v2" stroke="#2a4f80" fill="none" stroke-width=".8"/></svg>
<div class="t" style="left:15px;top:239.5px;color:#333">Structure</div>
<svg style="left:53px;top:239.5px" width="9" height="9" viewBox="0 0 9 9"><rect x=".5" y=".5" width="8" height="8" fill="#c9622a" stroke="#f4c9a0" stroke-width=".6"/><rect x="2" y="2" width="4" height="3" fill="#f6d9b8"/></svg>
<div class="t" style="left:64px;top:239.5px;color:#fbe3c8">Views</div>
<svg style="left:89px;top:239px" width="10" height="10" viewBox="0 0 10 10"><rect x="0" y="1" width="5" height="5" fill="#4a8cc3"/><rect x="4" y="0" width="5" height="5" fill="#e8875a"/><rect x="1" y="5" width="5" height="5" fill="#8fb0d0"/><path d="M5 4v6l1.500-1 1 2 1-.5-1-2h2z" fill="#fff" stroke="#333" stroke-width=".5"/></svg>
<div class="t" style="left:100.5px;top:239.5px;color:#333">Selections</div>
<div class="a" style="left:138.500px;top:239px;width:1px;height:11px;background:#999"></div>
<svg style="left:141.5px;top:239px" width="10" height="10" viewBox="0 0 10 10"><rect x="2.500" y=".5" width="7" height="7" fill="#dfe9f5" stroke="#6f94c0" stroke-width=".8"/><rect x=".5" y="2.500" width="7" height="7" fill="#eef3fa" stroke="#6f94c0" stroke-width=".8"/><rect x="2" y="5" width="4" height="3" fill="#4a8cc3"/></svg>
<div class="t" style="left:153px;top:239.5px;color:#333">Profiles</div>
<div class="a" style="left:182px;top:239px;width:1px;height:11px;background:#999"></div>
</div>
<div id="props" class="a" style="left:0;top:329px;width:192px;height:243px">
<div class="ph" style="left:0;top:0;width:191px"><div class="t">Properties</div><div class="pin" style="left:172px"></div><div class="cls" style="left:181px"></div></div>
<div class="a" style="left:0;top:14px;width:191px;height:214px;border:2px solid #eceff2;border-top:0"></div>
<svg style="left:5.1px;top:19px" width="9" height="9" viewBox="0 0 9 9"><rect x=".5" y=".5" width="8" height="8" fill="#f4f8fc" stroke="#5f86b5" stroke-width=".9"/><path d="M4.500 2v5M2 4.500h5" stroke="#1d3f70" stroke-width="1.200"/></svg>
<svg style="left:21.2px;top:19px" width="9" height="9" viewBox="0 0 9 9"><rect x=".5" y=".5" width="8" height="8" fill="#f4f8fc" stroke="#5f86b5" stroke-width=".9"/><path d="M2 4.500h5" stroke="#1d3f70" stroke-width="1.200"/></svg>
<svg style="left:36.7px;top:19px" width="9" height="9" viewBox="0 0 9 9"><rect x=".5" y=".5" width="8" height="8" fill="#f4f8fc" stroke="#bccbdc" stroke-width=".9"/><rect x="2" y="2" width="5" height="5" fill="#b9c9dc"/></svg>
<svg style="left:52.3px;top:19px" width="9" height="9" viewBox="0 0 9 9"><rect x=".5" y=".5" width="8" height="8" fill="#f4f8fc" stroke="#bccbdc" stroke-width=".9"/><rect x="2" y="2" width="5" height="5" fill="#d4dde8"/></svg>
<svg style="left:67.9px;top:19px" width="9" height="9" viewBox="0 0 9 9"><rect x=".5" y=".5" width="8" height="8" fill="#f4f8fc" stroke="#bccbdc" stroke-width=".9"/><path d="M2 3l2.500 3 2.500-3" fill="none" stroke="#b9c9dc"/></svg>
<div class="a" style="left:4px;top:32px;width:186px;height:151px;background:#f0f0f0"></div>
<div class="pm" style="left:5.500px;top:35.500px"></div><div class="t tree b" style="left:16.5px;top:33px;">Scene properties</div>
<div class="pm" style="left:18.500px;top:48px"></div><div class="t tree b" style="left:29px;top:45.5px;">Alignment</div>
<div class="a" style="left:24px;top:57px;width:155px;height:11.500px;background:#fff"></div>
<div class="t tree" style="left:29px;top:58px;">Up vector</div>
<div class="t tree" style="left:97.5px;top:58px;">Unknown value</div>
<div class="a" style="left:168px;top:57.500px;width:10.500px;height:10.500px;background:#e4e4e4;border:1px solid #b5b5b5"></div><svg style="left:170.5px;top:61px" width="6" height="4" viewBox="0 0 6 4"><path d="M.5.5l2.500 2.500 2.500-2.500" fill="none" stroke="#444" stroke-width=".9"/></svg>
<div class="a" style="left:24px;top:69.5px;width:155px;height:11.500px;background:#fff"></div>
<div class="t tree" style="left:29px;top:70.5px;">Vertical angle</div>
<div class="t tree" style="left:97.5px;top:70.5px;">45°</div>
<div class="a" style="left:24px;top:82px;width:155px;height:11.500px;background:#fff"></div>
<div class="t tree" style="left:29px;top:83px;">Horizontal angle</div>
<div class="t tree" style="left:97.5px;top:83px;">45°</div>
<div class="pm" style="left:18.500px;top:98px"></div><div class="t tree b" style="left:29px;top:95.5px;">Visualization</div>
<div class="a" style="left:24px;top:107px;width:155px;height:11.500px;background:#fff"></div>
<div class="t tree" style="left:29px;top:108px;">Show grid</div>
<div class="cb" style="left:97px;top:107.5px;width:10px;height:10px"></div>
<div class="a" style="left:24px;top:119.5px;width:155px;height:11.500px;background:#fff"></div>
<div class="t tree" style="left:29px;top:120.5px;">Show coordinate...</div>
<div class="cb ck" style="left:97px;top:120px;width:10px;height:10px"></div>
<div class="a" style="left:24px;top:132px;width:155px;height:11.500px;background:#fff"></div>
<div class="t tree" style="left:29px;top:133px;">Show rotation c...</div>
<div class="cb ck" style="left:97px;top:132.5px;width:10px;height:10px"></div>
<div class="a" style="left:24px;top:144.5px;width:155px;height:11.500px;background:#fff"></div>
<div class="t tree" style="left:29px;top:145.5px;">Use point size</div>
<div class="cb ck" style="left:97px;top:145px;width:10px;height:10px"></div>
<div class="a" style="left:24px;top:157px;width:155px;height:11.500px;background:#fff"></div>
<div class="t tree" style="left:29px;top:158px;">Point diameter</div>
<div class="t tree" style="left:97.5px;top:158px;">1.8 mm</div>
<div class="a" style="left:24px;top:169.5px;width:155px;height:11.500px;background:#fff"></div>
<div class="t tree" style="left:29px;top:170.5px;">Minimum frame r...</div>
<div class="t tree" style="left:97.5px;top:170.5px;">10 FPS</div>
<div class="a" style="left:179.500px;top:32px;width:10.500px;height:151px;background:#f0f0f0"></div>
<div class="a" style="left:180.500px;top:43px;width:8.500px;height:10px;background:#cdcdcd"></div>
<svg style="left:181.5px;top:35px" width="7" height="5" viewBox="0 0 7 5"><path d="M1 4l2.500-3 2.500 3" fill="none" stroke="#444" stroke-width="1"/></svg>
<svg style="left:181.5px;top:176px" width="7" height="5" viewBox="0 0 7 5"><path d="M1 1l2.500 3 2.500-3" fill="none" stroke="#444" stroke-width="1"/></svg>
<div class="a" style="left:4px;top:184px;width:186px;height:42px;background:#f0f0f0;border:1px solid #dedede"></div>
<div class="a" style="left:2px;top:228.500px;width:50px;height:12px;background:#e07f22"></div>
<svg style="left:5px;top:230.5px" width="9" height="8" viewBox="0 0 9 8"><rect x=".5" y=".5" width="8" height="7" fill="#e6eef8" stroke="#3a6ea5"/><rect x="1" y="1" width="7" height="2" fill="#3a6ea5"/></svg>
<div class="t" style="left:16px;top:229.5px;color:#fbe3c8">Properties</div>
<svg style="left:56px;top:229.5px" width="9" height="10" viewBox="0 0 9 10"><path d="M1 9l4-5" stroke="#555" stroke-width="1.500"/><circle cx="6" cy="3" r="2.200" fill="none" stroke="#555" stroke-width="1.200"/></svg>
<div class="t" style="left:67px;top:229.5px;color:#333">Licensing</div>
<div class="a" style="left:103px;top:229px;width:1px;height:11px;background:#999"></div>
</div>
<div class="a" style="left:192px;top:73px;width:576px;height:18px;background:#fff"></div>
<svg style="left:196px;top:75.500px" width="110" height="14" viewBox="0 0 110 14"><path d="M0.500 13.500L13.500 0.300H106.200V13.500Z" fill="#e07f22"/></svg>
<div class="t" style="left:216px;top:77.300px;color:#fff;font-weight:bold;font-size:7.800px;letter-spacing:-0.100px">V3463753_310522.jt</div>
<div class="a" style="left:290.500px;top:76.500px;width:11.500px;height:12px;background:#cf4a36;border:1px solid #e07f4a"></div><div class="a" style="left:295px;top:81.500px;width:2.500px;height:2.500px;background:#fbe0d4;border-radius:1px"></div>
<div class="a" style="left:196px;top:89px;width:572px;height:2px;background:#fcefe2"></div>
<div class="a" style="left:757px;top:77px;width:9px;height:9.500px;background:#a8a8a8;border:1px solid #c8c8c8"></div><div class="a" style="left:758.500px;top:80.500px;border:3px solid transparent;border-top:4px solid #111;border-bottom:0"></div>
<div class="a" style="left:193px;top:74px;width:1.500px;height:498px;background:#e6e6e6"></div>
<div class="a" style="left:765px;top:91px;width:2px;height:479px;background:#eef6fb"></div>
<div class="a" style="left:195.500px;top:568px;width:571.500px;height:2px;background:#eef6fb"></div>
<div id="viewport" class="a">
<svg style="left:0;top:0" width="569.500" height="477" viewBox="195.500 91 569.500 477">
<defs><linearGradient id="cres" x1="0" y1="0" x2="1" y2="0"><stop offset="0" stop-color="#4a9418"/><stop offset=".55" stop-color="#3f8014"/><stop offset="1" stop-color="#2f6410"/></linearGradient><radialGradient id="hg" cx=".5" cy=".8" r=".8"><stop offset="0" stop-color="#88d82c"/><stop offset="1" stop-color="#357a10"/></radialGradient><clipPath id="cin"><path d="M190 283 Q203 275.5 219 275.5 H576 A78.75 78.75 0 0 1 576 433 H219 Q203 433 190 426 Z M620 320.500 H646.800 A78.75 78.75 0 0 1 646.800 388.500 H620 Q637 354.500 620 320.500 Z" clip-rule="evenodd"/></clipPath><clipPath id="cout"><path d="M150 50H800V600H150Z M190 283 Q203 275.5 219 275.5 H576 A78.75 78.75 0 0 1 576 433 H219 Q203 433 190 426 Z M620 320.500 H646.800 A78.75 78.75 0 0 1 646.800 388.500 H620 Q637 354.500 620 320.500 Z" clip-rule="evenodd"/></clipPath></defs>
<path d="M190 283 Q203 275.5 219 275.5 H576 A78.75 78.75 0 0 1 576 433 H219 Q203 433 190 426 Z" fill="#86e62a" stroke="#1b4a10" stroke-width="1.6"/>
<path d="M620 320.500 H646.800 A78.75 78.75 0 0 1 646.800 388.500 H620 Q637 354.500 620 320.500 Z" fill="url(#cres)" stroke="#1b4a10" stroke-width="1.200"/>
<path d="M576 276.3 A77.95 77.95 0 0 1 646.800 320.500 H587 Q576 320.500 576 309 Z" fill="#80e02a"/>
<path d="M576 432.2 A77.95 77.95 0 0 0 646.800 388.500 H587 Q576 388.500 576 399 Z" fill="#80e02a"/>
<rect x="222.3" y="276" width="9.7" height="26" fill="#6cc01e"/><path d="M222.3 301.500H232" stroke="#1b4a10" stroke-width="1.300"/><rect x="222.3" y="407" width="9.7" height="25.5" fill="#3f7512"/><path d="M222.3 407H232" stroke="#1b4a10" stroke-width="1"/><rect x="272" y="276" width="10" height="26" fill="#6cc01e"/><path d="M272 301.500H282" stroke="#1b4a10" stroke-width="1.300"/><rect x="272" y="407" width="10" height="25.5" fill="#3f7512"/><path d="M272 407H282" stroke="#1b4a10" stroke-width="1"/><rect x="322" y="276" width="10" height="26" fill="#6cc01e"/><path d="M322 301.500H332" stroke="#1b4a10" stroke-width="1.300"/><rect x="322" y="407" width="10" height="25.5" fill="#3f7512"/><path d="M322 407H332" stroke="#1b4a10" stroke-width="1"/><rect x="372" y="276" width="10" height="26" fill="#6cc01e"/><path d="M372 301.500H382" stroke="#1b4a10" stroke-width="1.300"/><rect x="372" y="407" width="10" height="25.5" fill="#3f7512"/><path d="M372 407H382" stroke="#1b4a10" stroke-width="1"/><rect x="416" y="276" width="10" height="26" fill="#6cc01e"/><path d="M416 301.500H426" stroke="#1b4a10" stroke-width="1.300"/><rect x="416" y="407" width="10" height="25.5" fill="#3f7512"/><path d="M416 407H426" stroke="#1b4a10" stroke-width="1"/><rect x="466" y="276" width="10" height="26" fill="#6cc01e"/><path d="M466 301.500H476" stroke="#1b4a10" stroke-width="1.300"/><rect x="466" y="407" width="10" height="25.5" fill="#3f7512"/><path d="M466 407H476" stroke="#1b4a10" stroke-width="1"/><rect x="516" y="276" width="10" height="26" fill="#6cc01e"/><path d="M516 301.500H526" stroke="#1b4a10" stroke-width="1.300"/><rect x="516" y="407" width="10" height="25.5" fill="#3f7512"/><path d="M516 407H526" stroke="#1b4a10" stroke-width="1"/><rect x="566" y="276" width="10" height="26" fill="#6cc01e"/><path d="M566 301.500H576" stroke="#1b4a10" stroke-width="1.300"/><rect x="566" y="407" width="10" height="25.5" fill="#3f7512"/><path d="M566 407H576" stroke="#1b4a10" stroke-width="1"/>
<g fill="none" stroke="#1b4a10" stroke-width="2"><path d="M195 321 H211.300 Q222.300 321 222.300 310 V275.5"/><path d="M195 387.500 H211.300 Q222.300 387.500 222.300 398.500 V433"/><path d="M232 275.5 V310 Q232 321 243 321 H261 Q272 321 272 310 V275.5"/><path d="M232 433 V398.5 Q232 387.5 243 387.5 H261 Q272 387.5 272 398.5 V433"/><path d="M282 275.5 V310 Q282 321 293 321 H311 Q322 321 322 310 V275.5"/><path d="M282 433 V398.5 Q282 387.5 293 387.5 H311 Q322 387.5 322 398.5 V433"/><path d="M332 275.5 V310 Q332 321 343 321 H361 Q372 321 372 310 V275.5"/><path d="M332 433 V398.5 Q332 387.5 343 387.5 H361 Q372 387.5 372 398.5 V433"/><path d="M382 275.5 V310 Q382 321 393 321 H405 Q416 321 416 310 V275.5"/><path d="M382 433 V398.5 Q382 387.5 393 387.5 H405 Q416 387.5 416 398.5 V433"/><path d="M426 275.5 V310 Q426 321 437 321 H455 Q466 321 466 310 V275.5"/><path d="M426 433 V398.5 Q426 387.5 437 387.5 H455 Q466 387.5 466 398.5 V433"/><path d="M476 275.5 V310 Q476 321 487 321 H505 Q516 321 516 310 V275.5"/><path d="M476 433 V398.5 Q476 387.5 487 387.5 H505 Q516 387.5 516 398.5 V433"/><path d="M526 275.5 V310 Q526 321 537 321 H555 Q566 321 566 310 V275.5"/><path d="M526 433 V398.5 Q526 387.5 537 387.5 H555 Q566 387.5 566 398.5 V433"/><path d="M576 275.5 V309.500 Q576 320.500 587 320.500 H620"/><path d="M576 433 V399.500 Q576 388.500 587 388.500 H620"/></g>
<g stroke="#c8d020" stroke-width=".8" opacity=".75" fill="none"><path d="M225 354.500H240M268 354.500H330" /><path d="M303 322V336" stroke="#d8c020"/><path d="M303 372V392" stroke="#d8c020"/><path d="M400 304v8M442 304v8M494 306v6M400 398v8M494 398v6" stroke="#e0a020"/><path d="M380 354.500h12M398 354.500h8M420 354.500h75M380 376h130M330 376h40" stroke="#e0a020" stroke-dasharray="6 2"/><path d="M575 354.500h8" stroke="#e07020"/></g>
<rect x="430.500" y="349" width="66.500" height="19" rx="9.500" fill="#88e82c" stroke="#1b4a10" stroke-width="1.800"/><path d="M436 352h55" stroke="#c8d828" stroke-width="1.200" opacity=".8"/>
<g stroke="#10300a" stroke-width="1.100"><path d="M225 354.500H238"/><path d="M268 354.500H287"/><path d="M497 354.500H541"/><path d="M579 354.500H655"/></g>
<circle cx="214" cy="338" r="6.5" fill="url(#hg)" stroke="#1b4a10" stroke-width="1.7"/><path d="M208.8 336.05 A5.525 5.525 0 0 1 219.2 336.05" fill="none" stroke="#2d5f10" stroke-width="2.925"/><circle cx="246.5" cy="354.5" r="9.8" fill="url(#hg)" stroke="#1b4a10" stroke-width="1.7"/><path d="M238.66 351.56 A8.33 8.33 0 0 1 254.34 351.56" fill="none" stroke="#2d5f10" stroke-width="4.41"/><path d="M238 354.500h17M246.500 346v17" stroke="#c8e060" stroke-width=".7" opacity=".7"/><circle cx="301" cy="343.600" r="16" fill="#0c1406"/><circle cx="301" cy="344" r="9" fill="#7fe02a"/><path d="M296 349 L303 333 L300 346 Z" fill="#f2f6e8"/><path d="M285 343.600h32M301 328v32" stroke="#e8d890" stroke-width=".7" opacity=".8"/><path d="M290 351a13 13 0 0 0 22 0" fill="none" stroke="#2a3a10" stroke-width="3"/><circle cx="333.400" cy="343.600" r="10" fill="#4f9f1a" stroke="#1b4a10" stroke-width="1.300"/><circle cx="334" cy="344" r="5.200" fill="#7fd82a" stroke="#2d6010" stroke-width="1.200"/><path d="M326 343.600h10" stroke="#d8d040" stroke-width=".8"/><circle cx="268.5" cy="376" r="4.3" fill="url(#hg)" stroke="#1b4a10" stroke-width="1.5"/><path d="M265.06 374.71 A3.655 3.655 0 0 1 271.94 374.71" fill="none" stroke="#2d5f10" stroke-width="1.935"/><circle cx="311.5" cy="376" r="4.3" fill="url(#hg)" stroke="#1b4a10" stroke-width="1.5"/><path d="M308.06 374.71 A3.655 3.655 0 0 1 314.94 374.71" fill="none" stroke="#2d5f10" stroke-width="1.935"/><circle cx="355.5" cy="376" r="4.3" fill="url(#hg)" stroke="#1b4a10" stroke-width="1.5"/><path d="M352.06 374.71 A3.655 3.655 0 0 1 358.94 374.71" fill="none" stroke="#2d5f10" stroke-width="1.935"/><circle cx="399" cy="376" r="4.3" fill="url(#hg)" stroke="#1b4a10" stroke-width="1.5"/><path d="M395.56 374.71 A3.655 3.655 0 0 1 402.44 374.71" fill="none" stroke="#2d5f10" stroke-width="1.935"/><circle cx="529" cy="376" r="4.3" fill="url(#hg)" stroke="#1b4a10" stroke-width="1.5"/><path d="M525.56 374.71 A3.655 3.655 0 0 1 532.44 374.71" fill="none" stroke="#2d5f10" stroke-width="1.935"/><circle cx="399" cy="332.5" r="4.3" fill="url(#hg)" stroke="#1b4a10" stroke-width="1.5"/><path d="M395.56 331.21 A3.655 3.655 0 0 1 402.44 331.21" fill="none" stroke="#2d5f10" stroke-width="1.935"/><circle cx="442" cy="332.5" r="4.3" fill="url(#hg)" stroke="#1b4a10" stroke-width="1.5"/><path d="M438.56 331.21 A3.655 3.655 0 0 1 445.44 331.21" fill="none" stroke="#2d5f10" stroke-width="1.935"/><circle cx="485.5" cy="332.5" r="4.3" fill="url(#hg)" stroke="#1b4a10" stroke-width="1.5"/><path d="M482.06 331.21 A3.655 3.655 0 0 1 488.94 331.21" fill="none" stroke="#2d5f10" stroke-width="1.935"/><circle cx="529" cy="332.5" r="4.3" fill="url(#hg)" stroke="#1b4a10" stroke-width="1.5"/><path d="M525.56 331.21 A3.655 3.655 0 0 1 532.44 331.21" fill="none" stroke="#2d5f10" stroke-width="1.935"/><circle cx="550" cy="354.5" r="9.8" fill="url(#hg)" stroke="#1b4a10" stroke-width="1.7"/><path d="M542.16 351.56 A8.33 8.33 0 0 1 557.84 351.56" fill="none" stroke="#2d5f10" stroke-width="4.41"/><path d="M542 352.500h16" stroke="#e8f0c0" stroke-width=".8"/><circle cx="580" cy="336" r="5.8" fill="url(#hg)" stroke="#1b4a10" stroke-width="1.7"/><path d="M575.36 334.26 A4.93 4.93 0 0 1 584.64 334.26" fill="none" stroke="#2d5f10" stroke-width="2.61"/><circle cx="580" cy="372" r="5.8" fill="url(#hg)" stroke="#1b4a10" stroke-width="1.7"/><path d="M575.36 370.26 A4.93 4.93 0 0 1 584.64 370.26" fill="none" stroke="#2d5f10" stroke-width="2.61"/><circle cx="609" cy="354.5" r="6.3" fill="url(#hg)" stroke="#1b4a10" stroke-width="1.7"/><path d="M603.96 352.61 A5.355 5.355 0 0 1 614.04 352.61" fill="none" stroke="#2d5f10" stroke-width="2.835"/><circle cx="303" cy="300" r="7.800" fill="#17274f" stroke="#080e1c" stroke-width="2.600"/><circle cx="303" cy="300" r="2.600" fill="#34609c" opacity=".6"/><path d="M297.5 300h11M303 294.5v11" stroke="#d8c890" stroke-width=".7" opacity=".85"/><circle cx="494" cy="300" r="7.800" fill="#17274f" stroke="#080e1c" stroke-width="2.600"/><circle cx="494" cy="300" r="2.600" fill="#34609c" opacity=".6"/><path d="M488.5 300h11M494 294.5v11" stroke="#d8c890" stroke-width=".7" opacity=".85"/><circle cx="303" cy="409" r="7.800" fill="#17274f" stroke="#080e1c" stroke-width="2.600"/><circle cx="303" cy="409" r="2.600" fill="#34609c" opacity=".6"/><path d="M297.5 409h11M303 403.5v11" stroke="#d8c890" stroke-width=".7" opacity=".85"/><circle cx="494" cy="409" r="7.800" fill="#17274f" stroke="#080e1c" stroke-width="2.600"/><circle cx="494" cy="409" r="2.600" fill="#34609c" opacity=".6"/><path d="M488.5 409h11M494 403.5v11" stroke="#d8c890" stroke-width=".7" opacity=".85"/>
<g stroke="#eef3f8" stroke-width="1" fill="none" clip-path="url(#cout)"><path d="M196 259H240M207 259V334M220.300 259V334"/><path d="M405 252.500H497M431.300 252.500V318.500M496.500 252.500V436"/><path d="M505 203H624M524.400 203V319M533 203V319"/><path d="M541.400 238.600H675.500M541.400 238.600V352M559.300 238.600V317M664.400 212.500V238.600"/><path d="M708.500 284H701.500V367.300M629 350H704M629 367.300H704"/><path d="M641 430H631L586 388.700" stroke-width=".9"/><path d="M556 484.600H765M575 345V486.500M586 388.700V486.500"/><path d="M323.800 496H463.300M323.800 360V497.500M343.400 346V497.500"/><path d="M196 472.200H291.500M263.600 384V474M272 384V474"/><path d="M385 181H390" stroke="#dede44"/><path d="M390 181L333.500 276M390 181L466 276" stroke-width="1.050" stroke-dasharray="2 .9"/></g><g stroke="#eef3f8" stroke-width="1" fill="none" clip-path="url(#cin)" opacity=".42"><path d="M196 259H240M207 259V334M220.300 259V334"/><path d="M405 252.500H497M431.300 252.500V318.500M496.500 252.500V436"/><path d="M505 203H624M524.400 203V319M533 203V319"/><path d="M541.400 238.600H675.500M541.400 238.600V352M559.300 238.600V317M664.400 212.500V238.600"/><path d="M708.500 284H701.500V367.300M629 350H704M629 367.300H704"/><path d="M641 430H631L586 388.700" stroke-width=".9"/><path d="M556 484.600H765M575 345V486.500M586 388.700V486.500"/><path d="M323.800 496H463.300M323.800 360V497.500M343.400 346V497.500"/><path d="M196 472.200H291.500M263.600 384V474M272 384V474"/><path d="M385 181H390" stroke="#dede44"/><path d="M390 181L333.500 276M390 181L466 276" stroke-width="1.050" stroke-dasharray="2 .9"/></g>
<path d="M207 259 l-7 -1.8 v3.6 z" fill="#eef3f8"/><path d="M220.3 259 l7 -1.8 v3.6 z" fill="#eef3f8"/><path d="M431.3 252.5 l-7 -1.8 v3.6 z" fill="#eef3f8"/><path d="M431.3 252.5 l7 -1.8 v3.6 z" fill="#eef3f8"/><path d="M497 252.5 l-7 -1.8 v3.6 z" fill="#eef3f8"/><path d="M524.4 203 l-7 -1.8 v3.6 z" fill="#eef3f8"/><path d="M533 203 l7 -1.8 v3.6 z" fill="#eef3f8"/><path d="M541.4 238.6 l7 -1.8 v3.6 z" fill="#eef3f8"/><path d="M559 238.6 l-6.5 -1.8 v3.6 z" fill="#eef3f8"/><path d="M559 238.6 l6.5 -1.8 v3.6 z" fill="#eef3f8"/><path d="M701.5 350 l-1.8 -7 h3.6 z" fill="#eef3f8"/><path d="M701.5 350 l-1.8 6 h3.6 z" fill="#eef3f8"/><path d="M701.5 367.3 l-1.8 6 h3.6 z" fill="#eef3f8"/><path d="M701.5 361 l-1.8 -5 h3.6 z" fill="#eef3f8"/><path d="M575 484.6 l-7 -1.8 v3.6 z" fill="#eef3f8"/><path d="M586 484.6 l7 -1.8 v3.6 z" fill="#eef3f8"/><path d="M323.8 496 l7 -1.8 v3.6 z" fill="#eef3f8"/><path d="M343.4 496 l-7 -1.8 v3.6 z" fill="#eef3f8"/><path d="M263.6 472.2 l-7 -1.8 v3.6 z" fill="#eef3f8"/><path d="M272 472.2 l7 -1.8 v3.6 z" fill="#eef3f8"/>
<circle cx="255.6" cy="175.2" r="10.6" fill="none" stroke="#dede44" stroke-width="1.100"/><path d="M263.1 166.6L279.6 175.2L263.1 183.8Q269.1 175.2 263.1 166.6Z" fill="#f6e800"/><text x="255.6" y="178.9" font-size="10.500" text-anchor="middle" class="ann" fill="#dfe3c0">8</text><text x="283.2" y="170.3" font-size="10.5" textLength="15.6" lengthAdjust="spacingAndGlyphs" class="ann">(5x)</text><rect x="283.2" y="173.3" width="102" height="15.6" fill="none" stroke="#dede44" stroke-width="1"/><path d="M311.3 173.3V188.9" stroke="#dede44" stroke-width="1"/><path d="M334.8 173.3V188.9" stroke="#dede44" stroke-width="1"/><path d="M352.3 173.3V188.9" stroke="#dede44" stroke-width="1"/><path d="M369.6 173.3V188.9" stroke="#dede44" stroke-width="1"/><path d="M288 185.300h16.300M289.500 185.300a6.700 7.800 0 0 1 13.400 0" fill="none" stroke="#dede44" stroke-width="1"/><text x="315.6" y="186" font-size="11.5" textLength="15.1" lengthAdjust="spacingAndGlyphs" class="ann">0,2</text><text x="339.2" y="186" font-size="11.5" textLength="7" lengthAdjust="spacingAndGlyphs" class="ann">A</text><text x="355.6" y="186" font-size="11.5" textLength="6.4" lengthAdjust="spacingAndGlyphs" class="ann">B</text><text x="371.4" y="186" font-size="11.5" textLength="6" lengthAdjust="spacingAndGlyphs" class="ann">C</text><circle cx="292.8" cy="252.5" r="10.6" fill="none" stroke="#dede44" stroke-width="1.100"/><path d="M300.3 243.9L316.8 252.5L300.3 261.1Q306.3 252.5 300.3 243.9Z" fill="#f6e800"/><text x="292.8" y="256.2" font-size="10.500" text-anchor="middle" class="ann" fill="#dfe3c0">3</text><rect x="319.2" y="244.8" width="85.9" height="14.6" fill="none" stroke="#dede44" stroke-width="1"/><path d="M347.3 244.8V259.4" stroke="#dede44" stroke-width="1"/><path d="M370.8 244.8V259.4" stroke="#dede44" stroke-width="1"/><path d="M387.6 244.8V259.4" stroke="#dede44" stroke-width="1"/><circle cx="332.4" cy="252.4" r="3.3" fill="none" stroke="#dede44" stroke-width=".9"/><path d="M327.1 252.4h10.6M332.4 247.1v10.6" stroke="#dede44" stroke-width=".9"/><text x="350.9" y="257" font-size="11.5" textLength="13.9" lengthAdjust="spacingAndGlyphs" class="ann">0,2</text><text x="374.5" y="257" font-size="11.5" textLength="7" lengthAdjust="spacingAndGlyphs" class="ann">A</text><text x="391.6" y="257" font-size="11.5" textLength="6.4" lengthAdjust="spacingAndGlyphs" class="ann">B</text><text x="453.6" y="247" font-size="13" textLength="22.8" lengthAdjust="spacingAndGlyphs" class="ann">(30)</text><text x="509.6" y="200" font-size="11.5" textLength="10.4" lengthAdjust="spacingAndGlyphs" class="ann">5x</text><text x="527" y="200" font-size="11.5" textLength="25.5" lengthAdjust="spacingAndGlyphs" class="ann">M4x8</text><text x="560" y="200" font-size="11.5" textLength="34" lengthAdjust="spacingAndGlyphs" class="ann">±0,5/12</text><text x="602" y="200" font-size="11.5" textLength="21" lengthAdjust="spacingAndGlyphs" class="ann">±0,5</text><text x="571" y="234.4" font-size="11.5" textLength="10" lengthAdjust="spacingAndGlyphs" class="ann">2x</text><text x="584" y="234.4" font-size="11.5" textLength="10" lengthAdjust="spacingAndGlyphs" class="ann">∅</text><text x="597.5" y="234.4" font-size="11.5" textLength="5.5" lengthAdjust="spacingAndGlyphs" class="ann">8</text><text x="608.5" y="234.4" font-size="11.5" textLength="27.5" lengthAdjust="spacingAndGlyphs" class="ann">H7x16</text><text x="644" y="234.4" font-size="11.5" textLength="19" lengthAdjust="spacingAndGlyphs" class="ann">±0,5</text><circle cx="692.4" cy="213" r="10.6" fill="none" stroke="#dede44" stroke-width="1.100"/><path d="M684.9 204.4L668.9 213L684.9 221.6Q678.9 213 684.9 204.4Z" fill="#f6e800"/><text x="692.4" y="216.7" font-size="10.500" text-anchor="middle" class="ann" fill="#dfe3c0">1</text><rect x="675.3" y="230.7" width="85.6" height="15.3" fill="none" stroke="#dede44" stroke-width="1"/><path d="M703 230.7V246" stroke="#dede44" stroke-width="1"/><path d="M743.7 230.7V246" stroke="#dede44" stroke-width="1"/><circle cx="687.7" cy="238.5" r="3.3" fill="none" stroke="#dede44" stroke-width=".9"/><path d="M682.4 238.5h10.6M687.7 233.2v10.6" stroke="#dede44" stroke-width=".9"/><text x="710" y="243" font-size="11.5" textLength="9.3" lengthAdjust="spacingAndGlyphs" class="ann">∅</text><text x="724.8" y="243" font-size="11.5" textLength="12.2" lengthAdjust="spacingAndGlyphs" class="ann">0,2</text><text x="747.3" y="243" font-size="11.5" textLength="7" lengthAdjust="spacingAndGlyphs" class="ann">A</text><rect x="708.5" y="276.2" width="63.5" height="14.7" fill="none" stroke="#dede44" stroke-width="1"/><path d="M735.5 276.2V290.9" stroke="#dede44" stroke-width="1"/><circle cx="721.5" cy="283.8" r="3.3" fill="none" stroke="#dede44" stroke-width=".9"/><path d="M716.2 283.8h10.6M721.5 278.5v10.6" stroke="#dede44" stroke-width=".9"/><text x="739.8" y="288" font-size="11.5" textLength="13" lengthAdjust="spacingAndGlyphs" class="ann">0,2</text><circle cx="760.600" cy="283.800" r="4.700" fill="none" stroke="#dede44" stroke-width="1"/><text x="758.5" y="287.2" font-size="9" textLength="4.5" lengthAdjust="spacingAndGlyphs" class="ann">L</text><text transform="translate(698.600 334.800) rotate(-90)" font-size="11" textLength="32.500" lengthAdjust="spacingAndGlyphs" class="ann">8 &#160;±0,1</text><rect x="641.200" y="422" width="16.600" height="16.600" fill="none" stroke="#b4d860" stroke-width="1.100"/><text x="646.3" y="434.5" font-size="11.5" textLength="6.3" lengthAdjust="spacingAndGlyphs" class="ann" fill="#e8f0d8">C</text><text x="606.7" y="481.2" font-size="11.5" textLength="9.3" lengthAdjust="spacingAndGlyphs" class="ann">2x</text><text x="618" y="481.2" font-size="11.5" textLength="20" lengthAdjust="spacingAndGlyphs" class="ann">Wire</text><text x="645" y="481.2" font-size="11.5" textLength="15" lengthAdjust="spacingAndGlyphs" class="ann">Coil</text><text x="667" y="481.2" font-size="11.5" textLength="29" lengthAdjust="spacingAndGlyphs" class="ann">M4x13</text><text x="703.5" y="481.2" font-size="11.5" textLength="34" lengthAdjust="spacingAndGlyphs" class="ann">±0,5/16</text><text x="745" y="481.2" font-size="11.5" textLength="21" lengthAdjust="spacingAndGlyphs" class="ann">±0,5</text><text x="372.8" y="472.2" font-size="11.5" textLength="9.2" lengthAdjust="spacingAndGlyphs" class="ann">∅</text><text x="386" y="472.2" font-size="11.5" textLength="13" lengthAdjust="spacingAndGlyphs" class="ann">9,2</text><text x="406" y="472.2" font-size="11.5" textLength="40.2" lengthAdjust="spacingAndGlyphs" class="ann">±0,1x90°</text><text x="372.8" y="491" font-size="11.5" textLength="9.2" lengthAdjust="spacingAndGlyphs" class="ann">∅</text><text x="386" y="491" font-size="11.5" textLength="13" lengthAdjust="spacingAndGlyphs" class="ann">4,5</text><text x="402" y="491" font-size="11.5" textLength="32" lengthAdjust="spacingAndGlyphs" class="ann">H13x20</text><text x="442" y="491" font-size="11.5" textLength="21" lengthAdjust="spacingAndGlyphs" class="ann">±0,5</text><text x="193" y="469.4" font-size="11.5" textLength="5" lengthAdjust="spacingAndGlyphs" class="ann">2</text><text x="205.6" y="469.4" font-size="11.5" textLength="20.8" lengthAdjust="spacingAndGlyphs" class="ann">±0,5</text>
<path d="M252 476V511H290Z" fill="#16486a"/><path d="M252 476V511H270Z" fill="#123a58" opacity=".6"/><path d="M251.800 510V479" stroke="#0c18f4" stroke-width="5.400"/><path d="M251.800 467.500l-5 12.500h10z" fill="#1420ff"/><path d="M252 511.400H287" stroke="#10d818" stroke-width="5.400"/><path d="M297 511.400l-10.500-5v10z" fill="#14e01c"/><circle cx="251.800" cy="511.400" r="6.200" fill="#dc1010"/><circle cx="250" cy="509.500" r="2.300" fill="#f4604c" opacity=".6"/><text x="248" y="466.500" font-size="13" textLength="8.500" lengthAdjust="spacingAndGlyphs" fill="#2a3cf0" font-family="Liberation Sans,sans-serif">Z</text><text x="299" y="517" font-size="13" textLength="8.500" lengthAdjust="spacingAndGlyphs" fill="#20c838" font-family="Liberation Sans,sans-serif">Y</text>
</svg>
</div>
<div id="settings" class="a" style="left:768px;top:74px;width:232px;height:498px">
<div class="ph" style="left:2px;top:0;width:216px;height:13.500px"><div class="t">Settings</div><div class="pin" style="left:198px"></div><div class="cls" style="left:207.500px"></div></div>
<div class="a" style="left:1px;top:13px;width:218px;height:484px;border:2px solid #eceff2;border-top:0;border-right:1px solid #eceff2"></div>
<svg style="left:6.2px;top:18.5px" width="9" height="9" viewBox="0 0 9 9"><rect x=".5" y=".5" width="8" height="8" fill="#f4f8fc" stroke="#3a6ea5" stroke-width=".9"/><path d="M.5 4.500h8" stroke="#3a6ea5" stroke-width=".9"/></svg>
<svg style="left:21.8px;top:18.5px" width="9" height="9" viewBox="0 0 9 9"><rect x=".5" y=".5" width="8" height="8" fill="#f4f8fc" stroke="#3a6ea5" stroke-width=".9"/><path d="M.5 4.500h8" stroke="#3a6ea5" stroke-width=".9"/></svg>
<svg style="left:37.2px;top:18.5px" width="9" height="9" viewBox="0 0 9 9"><path d="M1 .5h7M1 8.500h7" stroke="#3a6ea5" stroke-width=".9"/><rect x="2.500" y="3" width="4" height="3.500" fill="#1d3f70"/><path d="M3 1.500h3" stroke="#1d3f70"/></svg>
<svg style="left:52.8px;top:18.5px" width="9" height="9" viewBox="0 0 9 9"><path d="M1 .5h7M1 8.500h7" stroke="#3a6ea5" stroke-width=".9"/><path d="M3 2.500h2.500a2 2 0 0 1 0 4H3z" fill="none" stroke="#1d3f70" stroke-width=".9"/></svg>
<div class="t" style="left:71.5px;top:18.5px;color:#555">Search</div>
<div class="t" style="left:207.5px;top:18px;color:#222;font-size:8px">x</div>
<div class="a" style="left:2.500px;top:32px;width:32px;height:13.500px;background:#e07f22"></div>
<div class="t" style="left:5.5px;top:33.5px;color:#fbe3c8">Default</div>
<div class="t" style="left:38px;top:33.5px;color:#333">Current scene</div>
<div class="a" style="left:88.500px;top:33px;width:1px;height:11px;background:#999"></div>
<div class="a" style="left:3.500px;top:46px;width:215px;height:376px;background:#f0f0f0;border-top:1px solid #cfcfcf"></div>
<div class="a" style="left:3.500px;top:422px;width:215px;height:30px;background:#fff"></div>
<div class="a" style="left:110.500px;top:422px;width:1px;height:30px;background:#ececec"></div>
<div class="pm" style="left:7px;top:50.5px"></div><div class="t tree b" style="left:18.5px;top:48px;">Import</div>
<div class="pm plus" style="left:19.5px;top:63px"></div><div class="t tree b" style="left:31px;top:60.5px;">General</div>
<div class="pm plus" style="left:19.5px;top:75.5px"></div><div class="t tree b" style="left:31px;top:73px;">Filters</div>
<div class="pm plus" style="left:19.5px;top:88px"></div><div class="t tree b" style="left:31px;top:85.5px;">Unit</div>
<div class="pm plus" style="left:19.5px;top:100.5px"></div><div class="t tree b" style="left:31px;top:98px;">Physical properties</div>
<div class="pm plus" style="left:19.5px;top:113px"></div><div class="t tree b" style="left:31px;top:110.5px;">Assembly handling</div>
<div class="pm plus" style="left:19.5px;top:125.5px"></div><div class="t tree b" style="left:31px;top:123px;">Views</div>
<div class="pm plus" style="left:19.5px;top:138px"></div><div class="t tree b" style="left:31px;top:135.5px;">Layer</div>
<div class="pm plus" style="left:19.5px;top:150.5px"></div><div class="t tree b" style="left:31px;top:148px;">Fonts</div>
<div class="pm plus" style="left:19.5px;top:163px"></div><div class="t tree b" style="left:31px;top:160.5px;">Miscellaneous</div>
<div class="pm plus" style="left:19.5px;top:175.5px"></div><div class="t tree b" style="left:31px;top:173px;">3DVS</div>
<div class="pm plus" style="left:19.5px;top:188px"></div><div class="t tree b" style="left:31px;top:185.5px;">STEP</div>
<div class="pm" style="left:19.5px;top:200.5px"></div><div class="a" style="left:29px;top:197px;width:11px;height:11.500px;border:1px dotted #777"></div><div class="t tree b" style="left:31px;top:198px;">JT</div>
<div class="a" style="left:28px;top:209.5px;width:190px;height:11.500px;background:#fff"></div>
<div class="t tree" style="left:30.5px;top:210.5px;color:#333">Level of detail of tes...</div>
<div class="t tree" style="left:112.5px;top:210.5px;color:#333">High</div>
<div class="a" style="left:207px;top:210px;width:10.500px;height:10.500px;background:#e4e4e4;border:1px solid #b5b5b5"></div><svg style="left:209.5px;top:213.5px" width="6" height="4" viewBox="0 0 6 4"><path d="M.5.5l2.500 2.500 2.500-2.500" fill="none" stroke="#444" stroke-width=".9"/></svg>
<div class="a" style="left:28px;top:222px;width:190px;height:11.500px;background:#fff"></div>
<div class="t tree" style="left:30.5px;top:223px;color:#333">PMI self-interpretation</div>
<div class="cb" style="left:111px;top:222.5px;width:10px;height:10px"></div>
<div class="a" style="left:28px;top:234.5px;width:190px;height:11.500px;background:#fff"></div>
<div class="t tree" style="left:30.5px;top:235.5px;color:#333">PMI use fallback imp...</div>
<div class="cb ck" style="left:111px;top:235px;width:10px;height:10px"></div>
<div class="a" style="left:28px;top:247px;width:190px;height:11.500px;background:#fff"></div>
<div class="t tree" style="left:30.5px;top:248px;color:#333">Alternative JT import...</div>
<div class="cb ck" style="left:111px;top:247.5px;width:10px;height:10px"></div>
<div class="a" style="left:28px;top:259.5px;width:190px;height:11.500px;background:#fff"></div>
<div class="t tree" style="left:30.5px;top:260.5px;color:#333">Use background color</div>
<div class="cb ck" style="left:111px;top:260px;width:10px;height:10px"></div>
<div class="pm plus" style="left:19.5px;top:275.5px"></div><div class="t tree b" style="left:31px;top:273px;">PLMXML</div>
<div class="pm plus" style="left:19.5px;top:288px"></div><div class="t tree b" style="left:31px;top:285.5px;">CREO / ProENGINEER</div>
<div class="pm plus" style="left:19.5px;top:300.5px"></div><div class="t tree b" style="left:31px;top:298px;">STL</div>
<div class="pm plus" style="left:19.5px;top:313px"></div><div class="t tree b" style="left:31px;top:310.5px;">OBJ</div>
<div class="pm plus" style="left:19.5px;top:325.5px"></div><div class="t tree b" style="left:31px;top:323px;">E57</div>
<div class="pm plus" style="left:19.5px;top:338px"></div><div class="t tree b" style="left:31px;top:335.5px;">PDF</div>
<div class="pm plus" style="left:19.5px;top:350.5px"></div><div class="t tree b" style="left:31px;top:348px;">2D</div>
<div class="pm plus" style="left:19.5px;top:363px"></div><div class="t tree b" style="left:31px;top:360.5px;">DWG / DXF</div>
<div class="pm plus" style="left:19.5px;top:375.5px"></div><div class="t tree b" style="left:31px;top:373px;">Text</div>
<div class="pm plus" style="left:7px;top:388px"></div><div class="t tree b" style="left:18.5px;top:385.5px;">Export</div>
<div class="pm plus" style="left:7px;top:400.5px"></div><div class="t tree b" style="left:18.5px;top:398px;">Scene</div>
<div class="pm plus" style="left:7px;top:413px"></div><div class="t tree b" style="left:18.5px;top:410.5px;">Application</div>
<div class="a" style="left:3.500px;top:454px;width:214px;height:40px;background:#f0f0f0;border:1px solid #d2d2d2"></div>
<div class="t tree b" style="left:8px;top:457.5px;">JT</div>
<div class="a" style="left:220px;top:1px;width:12px;height:77px;background:#f0f0f0;border:1px solid #d0d0d0;border-right:0"></div>
<svg style="left:222px;top:3px" width="10" height="10" viewBox="0 0 10 10"><rect x=".5" y=".5" width="9" height="9" fill="#fff" stroke="#b55" stroke-width=".8"/><path d="M.5 3h9M.5 6h9M3.500 .5v9M6.500 .5v9" stroke="#b99" stroke-width=".6"/><rect x=".5" y=".5" width="9" height="2.500" fill="#d98"/></svg>
<div class="t" style="left:231px;top:17px;transform-origin:0 0;transform:rotate(90deg);color:#888">Bill of material</div>
</div>
<div id="status" class="a" style="left:0;top:571px;width:1000px;height:13px;background:#fff;border-top:1px solid #ececec">
<div class="t" style="left:365px;top:2.5px;color:#666;font-size:7.400px">Width: 1098, Height: 916, X: 517, Y: 325</div>
<div class="t" style="left:683px;top:2.5px;color:#666;font-size:7.400px">0/1 Selected geometries</div>
<div class="t" style="left:842.5px;top:2.5px;color:#888;font-size:7.400px">JT</div>
<div class="a" style="left:361.5px;top:1px;width:1px;height:12px;background:#dcdcdc"></div><div class="a" style="left:521px;top:1px;width:1px;height:12px;background:#dcdcdc"></div><div class="a" style="left:680px;top:1px;width:1px;height:12px;background:#dcdcdc"></div><div class="a" style="left:839.5px;top:1px;width:1px;height:12px;background:#dcdcdc"></div></div>
</body>
</html>
